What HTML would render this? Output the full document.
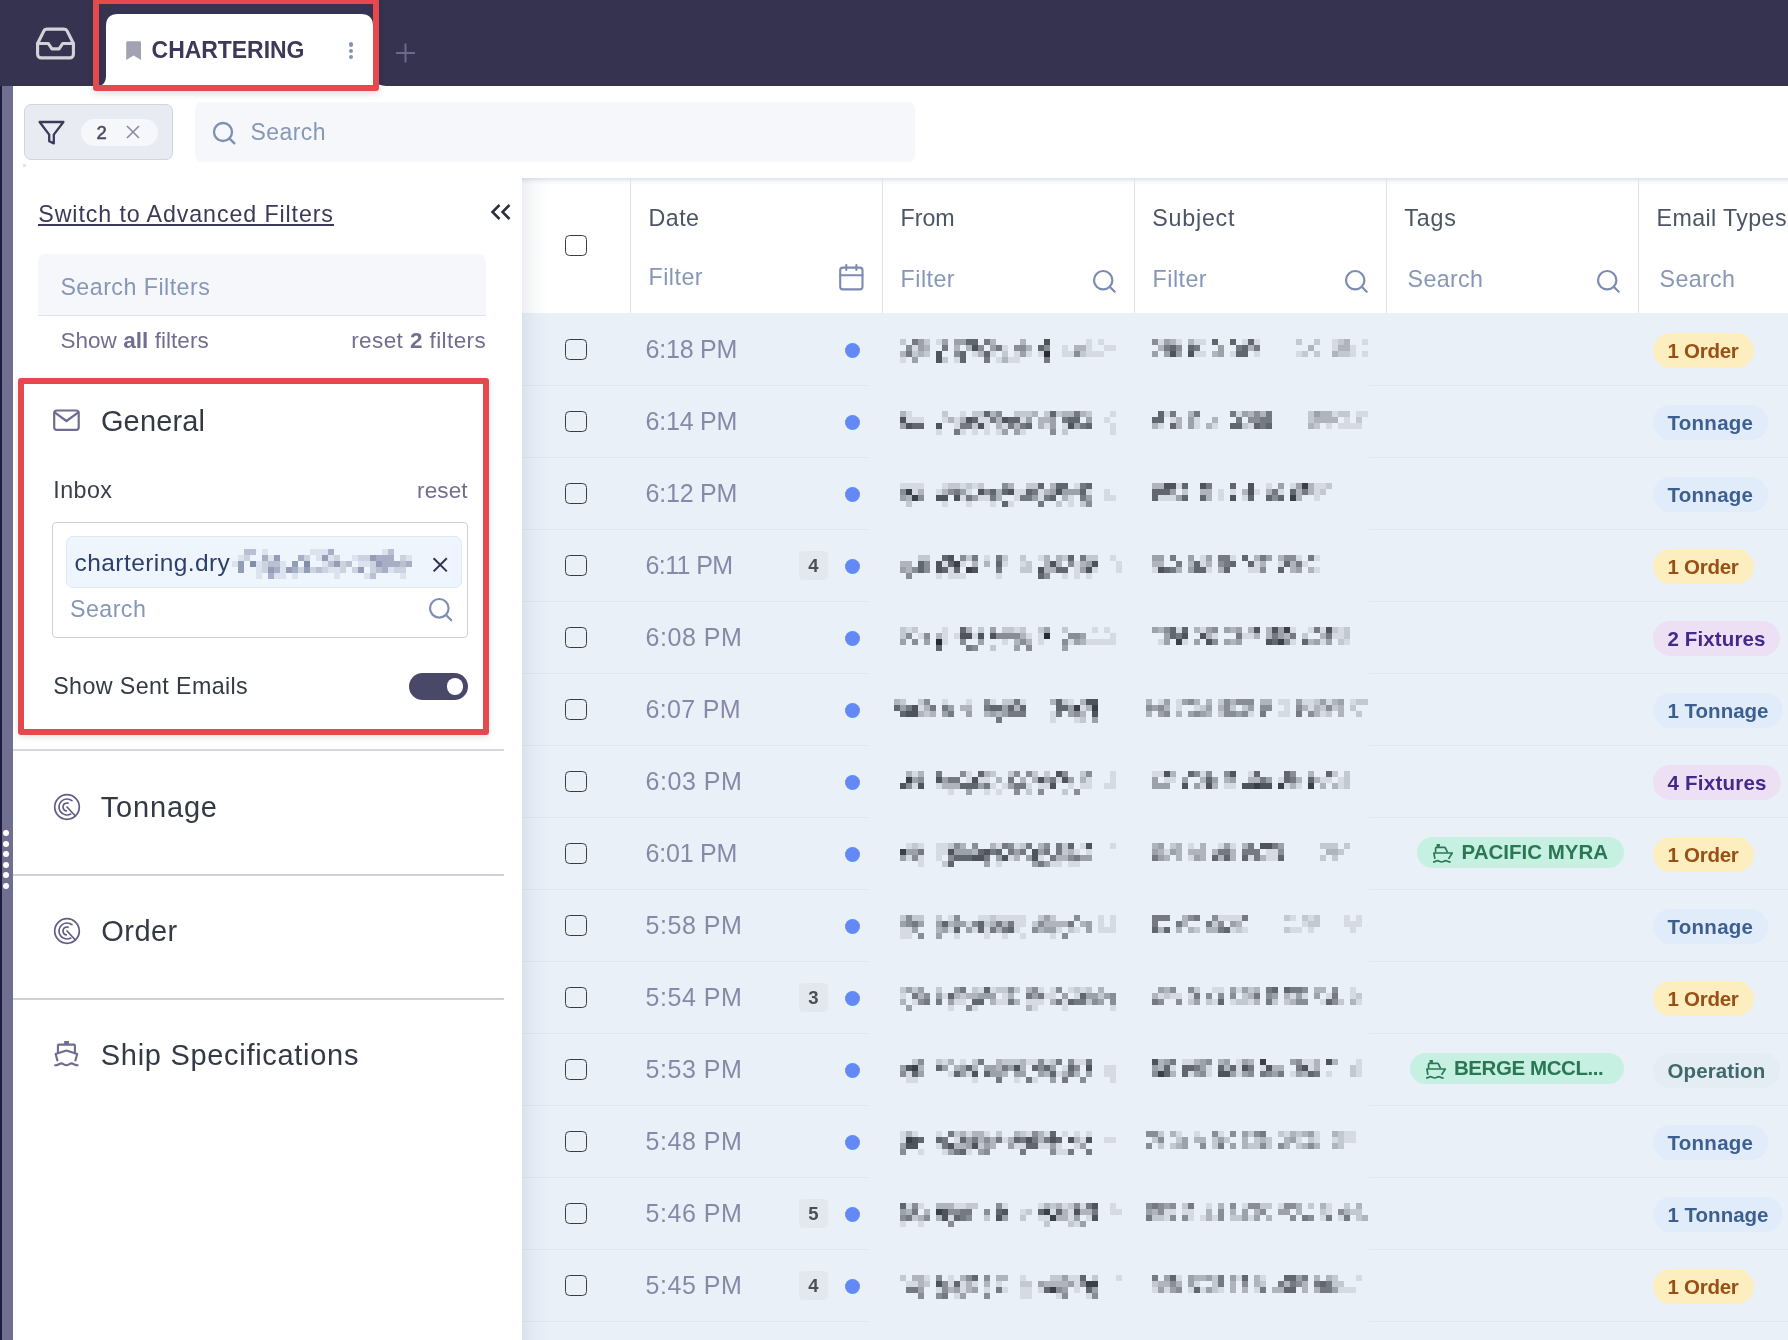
<!DOCTYPE html>
<html lang="en"><head><meta charset="utf-8"><title>Chartering</title>
<style>
*{box-sizing:border-box;margin:0;padding:0}
html,body{width:1788px;height:1340px;overflow:hidden;background:#fff}
body{position:relative;font-family:"Liberation Sans",sans-serif;}
.ab{position:absolute;display:block}
.t{position:absolute;line-height:1;white-space:nowrap}
.cb{position:absolute;width:22px;height:21px;border:1.6px solid #3d3d3d;border-radius:4.5px;background:#fff}
.pill{position:absolute;height:35px;border-radius:18px}
.rl{position:absolute;height:1px;background:#e2e6ed}
.vd{position:absolute;width:1.5px;background:#dfe3ea;top:178px;height:135px}
</style></head><body><div id="root" style="position:absolute;left:0;top:0;width:1788px;height:1340px;will-change:transform">

<div class="ab" style="left:0;top:0;width:1788px;height:86px;background:#35334f"></div>
<div class="ab" style="left:0;top:86px;width:2px;height:1254px;background:#1f1d3f"></div>
<div class="ab" style="left:2px;top:86px;width:11px;height:1254px;background:#706f90"></div>
<div class="ab" style="left:3px;top:830.4px;width:6px;height:6px;border-radius:50%;background:#fff"></div>
<div class="ab" style="left:3px;top:840.9px;width:6px;height:6px;border-radius:50%;background:#fff"></div>
<div class="ab" style="left:3px;top:851.3px;width:6px;height:6px;border-radius:50%;background:#fff"></div>
<div class="ab" style="left:3px;top:861.8px;width:6px;height:6px;border-radius:50%;background:#fff"></div>
<div class="ab" style="left:3px;top:872.2px;width:6px;height:6px;border-radius:50%;background:#fff"></div>
<div class="ab" style="left:3px;top:882.6px;width:6px;height:6px;border-radius:50%;background:#fff"></div>
<svg class="ab" style="left:34px;top:21.5px" width="43" height="43" viewBox="0 0 24 24" fill="none" stroke="#d3d2d9" stroke-width="1.75" stroke-linecap="round" stroke-linejoin="round"><polyline points="22 12 16 12 14 15 10 15 8 12 2 12"/><path d="M5.45 5.11L2 12v6a2 2 0 0 0 2 2h16a2 2 0 0 0 2-2v-6l-3.45-6.89A2 2 0 0 0 16.76 4H7.24a2 2 0 0 0-1.79 1.11z"/></svg>
<svg class="ab" style="left:93px;top:0" width="300" height="92" viewBox="93 0 300 92"><path d="M99 86 C104 85 106 81 106 76 L106 26 Q106 14 118 14 L361 14 Q373 14 373 26 L373 76 C373 81 376 85 386 86 L386 87 L99 87 Z" fill="#fff"/></svg>
<svg class="ab" style="left:394px;top:41px" width="24" height="24" viewBox="394 41 24 24" stroke="#6b6a8a" stroke-width="2" fill="none"><path d="M405.5 43.5V62.5M396 53H415"/></svg>
<svg class="ab" style="left:124px;top:39px" width="20" height="24" viewBox="124 39 20 24"><path d="M126.2 42.6q0-1.4 1.4-1.4h12q1.4 0 1.4 1.4V60l-7.4-4.4L126.2 60z" fill="#a3a2b3"/></svg>
<div class="t" style="left:151.6px;top:39px;font-size:23.0px;color:#3b3a5a;letter-spacing:-0.05px;font-weight:700;">CHARTERING</div>
<div class="ab" style="left:348.7px;top:42.4px;width:4.2px;height:4.2px;border-radius:50%;background:#8493b3"></div>
<div class="ab" style="left:348.7px;top:48.7px;width:4.2px;height:4.2px;border-radius:50%;background:#8493b3"></div>
<div class="ab" style="left:348.7px;top:55.0px;width:4.2px;height:4.2px;border-radius:50%;background:#8493b3"></div>
<div class="ab" style="left:93px;top:-1.6px;width:286px;height:92.1px;border:6px solid #e5484d;border-radius:3px;box-shadow:0 3px 7px rgba(0,0,0,.12)"></div>
<div class="ab" style="left:24px;top:104px;width:149px;height:56px;background:#e8ebf1;border:1px solid #cfd6e2;border-radius:7px"></div>
<svg class="ab" style="left:36px;top:118px" width="32" height="30" viewBox="36 118 32 30" fill="none" stroke="#3b3a5a" stroke-width="2.3" stroke-linejoin="round"><path d="M39.6 122H63.4L53.8 134.6V143.4L49.2 141.2V134.6Z"/></svg>
<div class="ab" style="left:81px;top:119px;width:77px;height:27px;border-radius:14px;background:#f5f7fb"></div>
<div class="t" style="left:96.6px;top:124px;font-size:18.5px;color:#4a4868;-webkit-text-stroke:0.5px #4a4868;">2</div>
<svg class="ab" style="left:124px;top:123px" width="18" height="18" viewBox="124 123 18 18" stroke="#8b8aa3" stroke-width="1.6" fill="none"><path d="M127 126L139 138M139 126L127 138"/></svg>
<div class="ab" style="left:195px;top:102px;width:720px;height:60px;background:#f5f7fb;border-radius:7px"></div>
<svg class="ab" style="left:211.5px;top:120.5px" width="29.0" height="29.0" viewBox="211.5 120.5 29.0 29.0" fill="none" stroke="#7f8fb2" stroke-width="2.3" stroke-linecap="round"><circle cx="222.5" cy="131.5" r="9"/><path d="M228.86 137.86L233.86 142.86"/></svg>
<div class="t" style="left:250.5px;top:121px;font-size:23.0px;color:#8797b7;letter-spacing:0.42px;">Search</div>
<div class="ab" style="left:22.5px;top:163.5px;width:3px;height:3px;background:#e3e5ea"></div>
<div class="t" style="left:38.3px;top:203px;font-size:23.25px;color:#3b3a5a;letter-spacing:0.88px;">Switch to Advanced Filters</div>
<div class="ab" style="left:38px;top:224.2px;width:295.5px;height:1.7px;background:#3b3a5a"></div>
<svg class="ab" style="left:488px;top:200px" width="26" height="24" viewBox="488 200 26 24" fill="none" stroke="#2b2f3d" stroke-width="2.5" stroke-linecap="butt" stroke-linejoin="miter"><path d="M499.5 205L492.5 212L499.5 219M509.5 205L502.5 212L509.5 219"/></svg>
<div class="ab" style="left:38px;top:254px;width:448px;height:61.5px;background:#f5f7fb;border-radius:7px 7px 0 0;border-bottom:1.5px solid #d9e4f3"></div>
<div class="t" style="left:60.4px;top:276px;font-size:23.25px;color:#8797b7;letter-spacing:0.46px;">Search Filters</div>
<div class="t" style="left:60.4px;top:330px;font-size:22.5px;color:#706f90;letter-spacing:0.05px;">Show <b>all</b> filters</div>
<div class="t" style="left:351.2px;top:330px;font-size:22.5px;color:#706f90;letter-spacing:0.41px;">reset <b>2</b> filters</div>
<svg class="ab" style="left:51px;top:407px" width="32" height="27" viewBox="51 407 32 27" fill="none" stroke="#6e6c90" stroke-width="2.2" stroke-linejoin="round" stroke-linecap="round"><rect x="54.2" y="410.5" width="24.5" height="19.4" rx="2.6"/><path d="M54.6 412.3L66.45 421L78.3 412.3"/></svg>
<div class="t" style="left:100.9px;top:407px;font-size:29.0px;color:#333a45;letter-spacing:0.15px;">General</div>
<div class="t" style="left:53.2px;top:479px;font-size:23.25px;color:#3a3f4a;letter-spacing:0.48px;">Inbox</div>
<div class="t" style="left:417.0px;top:480px;font-size:22.5px;color:#706f90;letter-spacing:0.14px;">reset</div>
<div class="ab" style="left:52px;top:522px;width:416px;height:115.5px;border:1.3px solid #cdd0d6;border-radius:4px;background:#fff"></div>
<div class="ab" style="left:66px;top:536px;width:396px;height:51.5px;border:1px solid #dde9f8;border-radius:7px;background:#eff5fd"></div>
<div class="t" style="left:74.6px;top:551px;font-size:24.5px;color:#2d3f6b;letter-spacing:0.42px;">chartering.dry</div>
<svg class="ab" style="left:430px;top:555px" width="20" height="20" viewBox="430 555 20 20" stroke="#2d3350" stroke-width="2" fill="none"><path d="M433.6 558.2L446.8 571.4M446.8 558.2L433.6 571.4"/></svg>
<div class="t" style="left:70.0px;top:598px;font-size:23.25px;color:#8797b7;letter-spacing:0.43px;">Search</div>
<svg class="ab" style="left:427.5px;top:596.9px" width="30.0" height="30.0" viewBox="427.5 596.9 30.0 30.0" fill="none" stroke="#7f8fb2" stroke-width="2.2" stroke-linecap="round"><circle cx="438.8" cy="608.2" r="9.3"/><path d="M445.38 614.78L450.78 620.18"/></svg>
<div class="t" style="left:53.2px;top:675px;font-size:23.25px;color:#333a45;letter-spacing:0.39px;">Show Sent Emails</div>
<div class="ab" style="left:408.8px;top:673px;width:59px;height:27px;border-radius:14px;background:#4a4868"></div>
<div class="ab" style="left:446.6px;top:678.2px;width:16.8px;height:16.8px;border-radius:50%;background:#fff"></div>
<div class="ab" style="left:18px;top:378px;width:471px;height:357px;border:6px solid #e5484d;border-radius:3px;box-shadow:0 2px 6px rgba(0,0,0,.11)"></div>
<div class="ab" style="left:13px;top:749.3px;width:491px;height:1.6px;background:#d6d8de"></div>
<div class="ab" style="left:13px;top:874px;width:491px;height:2px;background:#cfd1d9"></div>
<div class="ab" style="left:13px;top:998px;width:491px;height:2px;background:#cfd1d9"></div>
<svg class="ab" style="left:51.75px;top:791.7px" width="30" height="30" viewBox="51.75 791.7 30 30" fill="none" stroke="#5f5c87" stroke-width="1.7" stroke-linecap="round"><circle cx="66.75" cy="806.7" r="12.3"/><path d="M71.68 800.40A8 8 0 1 0 70.51 813.76"/><path d="M67.79 802.84A4 4 0 1 0 66.06 810.64"/><path d="M66.75 806.7L75.14 815.70"/></svg>
<div class="t" style="left:100.7px;top:793px;font-size:29.0px;color:#333a45;letter-spacing:0.84px;">Tonnage</div>
<svg class="ab" style="left:51.75px;top:915.9px" width="30" height="30" viewBox="51.75 915.9 30 30" fill="none" stroke="#5f5c87" stroke-width="1.7" stroke-linecap="round"><circle cx="66.75" cy="930.9" r="12.3"/><path d="M71.68 924.60A8 8 0 1 0 70.51 937.96"/><path d="M67.79 927.04A4 4 0 1 0 66.06 934.84"/><path d="M66.75 930.9L75.14 939.90"/></svg>
<div class="t" style="left:101.2px;top:917px;font-size:29.0px;color:#333a45;letter-spacing:0.49px;">Order</div>
<svg class="ab" style="left:52px;top:1039px" width="30" height="30" viewBox="52 1039 30 30" fill="none" stroke="#6e6c90" stroke-width="2.1" stroke-linejoin="round" stroke-linecap="butt"><rect x="64.2" y="1041" width="4.7" height="3.6" fill="#6e6c90" stroke="none"/><path d="M57.9 1053V1045.6Q57.9 1044.6 58.9 1044.6H73.9Q74.9 1044.6 74.9 1045.6V1053"/><path d="M57.6 1061.2L55.6 1054L66.4 1050.6L77.2 1054L75.2 1061.2"/><path d="M54.3 1065.3H55.3C58 1065.3 59.5 1063.4 61.3 1063.4C63.3 1063.4 64.3 1065.3 66.4 1065.3C68.5 1065.3 69.5 1063.4 71.5 1063.4C73.3 1063.4 74.8 1065.3 77.5 1065.3H78.5"/></svg>
<div class="t" style="left:100.8px;top:1041px;font-size:29.0px;color:#333a45;letter-spacing:0.70px;">Ship Specifications</div>
<div class="ab" style="left:522px;top:178px;width:1266px;height:135px;background:#fff"></div>
<div class="ab" style="left:522px;top:313px;width:1266px;height:1027px;background:#eaf0f8"></div>
<div class="rl" style="left:522px;top:385.0px;width:346px"></div>
<div class="rl" style="left:1369px;top:385.0px;width:419px"></div>
<div class="rl" style="left:522px;top:457.0px;width:346px"></div>
<div class="rl" style="left:1369px;top:457.0px;width:419px"></div>
<div class="rl" style="left:522px;top:529.0px;width:346px"></div>
<div class="rl" style="left:1369px;top:529.0px;width:419px"></div>
<div class="rl" style="left:522px;top:601.0px;width:346px"></div>
<div class="rl" style="left:1369px;top:601.0px;width:419px"></div>
<div class="rl" style="left:522px;top:673.0px;width:346px"></div>
<div class="rl" style="left:1369px;top:673.0px;width:419px"></div>
<div class="rl" style="left:522px;top:745.0px;width:346px"></div>
<div class="rl" style="left:1369px;top:745.0px;width:419px"></div>
<div class="rl" style="left:522px;top:817.0px;width:346px"></div>
<div class="rl" style="left:1369px;top:817.0px;width:419px"></div>
<div class="rl" style="left:522px;top:889.0px;width:346px"></div>
<div class="rl" style="left:1369px;top:889.0px;width:419px"></div>
<div class="rl" style="left:522px;top:961.0px;width:346px"></div>
<div class="rl" style="left:1369px;top:961.0px;width:419px"></div>
<div class="rl" style="left:522px;top:1033.0px;width:346px"></div>
<div class="rl" style="left:1369px;top:1033.0px;width:419px"></div>
<div class="rl" style="left:522px;top:1105.0px;width:346px"></div>
<div class="rl" style="left:1369px;top:1105.0px;width:419px"></div>
<div class="rl" style="left:522px;top:1177.0px;width:346px"></div>
<div class="rl" style="left:1369px;top:1177.0px;width:419px"></div>
<div class="rl" style="left:522px;top:1249.0px;width:346px"></div>
<div class="rl" style="left:1369px;top:1249.0px;width:419px"></div>
<div class="rl" style="left:522px;top:1321.0px;width:346px"></div>
<div class="rl" style="left:1369px;top:1321.0px;width:419px"></div>
<div class="ab" style="left:522px;top:178px;width:1266px;height:7px;background:linear-gradient(#dfe3eb,rgba(240,242,246,.6) 55%,rgba(255,255,255,0))"></div>
<div class="ab" style="left:522px;top:178px;width:26px;height:1162px;background:linear-gradient(90deg,rgba(120,130,155,.13),rgba(120,130,155,.05) 45%,rgba(120,130,155,0))"></div>
<div class="vd" style="left:629.7px"></div>
<div class="vd" style="left:881.7px"></div>
<div class="vd" style="left:1133.7px"></div>
<div class="vd" style="left:1385.7px"></div>
<div class="vd" style="left:1637.7px"></div>
<div class="cb" style="left:565px;top:235px"></div>
<div class="t" style="left:648.6px;top:207px;font-size:23.25px;color:#4b5563;letter-spacing:0.43px;">Date</div>
<div class="t" style="left:900.6px;top:207px;font-size:23.25px;color:#4b5563;letter-spacing:-0.08px;">From</div>
<div class="t" style="left:1152.3px;top:207px;font-size:23.25px;color:#4b5563;letter-spacing:0.77px;">Subject</div>
<div class="t" style="left:1404.3px;top:207px;font-size:23.25px;color:#4b5563;letter-spacing:0.86px;">Tags</div>
<div class="t" style="left:1656.5px;top:207px;font-size:23.25px;color:#4b5563;letter-spacing:0.38px;">Email Types</div>
<div class="t" style="left:648.6px;top:266px;font-size:23.25px;color:#8797b7;letter-spacing:0.45px;">Filter</div>
<div class="t" style="left:900.6px;top:268px;font-size:23.25px;color:#8797b7;letter-spacing:0.47px;">Filter</div>
<div class="t" style="left:1152.6px;top:268px;font-size:23.25px;color:#8797b7;letter-spacing:0.47px;">Filter</div>
<div class="t" style="left:1407.6px;top:268px;font-size:23.25px;color:#8797b7;letter-spacing:0.35px;">Search</div>
<div class="t" style="left:1659.6px;top:268px;font-size:23.25px;color:#8797b7;letter-spacing:0.35px;">Search</div>
<svg class="ab" style="left:837px;top:262px" width="30" height="32" viewBox="837 262 30 32" fill="none" stroke="#7b8bb2" stroke-width="2.1" stroke-linecap="round" stroke-linejoin="round"><rect x="840.2" y="267.6" width="22.3" height="21.8" rx="2.6"/><path d="M840.2 275.2H862.5M846.3 265V270M856.4 265V270"/></svg>
<svg class="ab" style="left:1092.1px;top:269.1px" width="29.4" height="29.4" viewBox="1092.1 269.1 29.4 29.4" fill="none" stroke="#7b8bb2" stroke-width="2.2" stroke-linecap="round"><circle cx="1103.3" cy="280.3" r="9.2"/><path d="M1109.81 286.81L1114.81 291.81"/></svg>
<svg class="ab" style="left:1344.1px;top:269.1px" width="29.4" height="29.4" viewBox="1344.1 269.1 29.4 29.4" fill="none" stroke="#7b8bb2" stroke-width="2.2" stroke-linecap="round"><circle cx="1355.3" cy="280.3" r="9.2"/><path d="M1361.81 286.81L1366.81 291.81"/></svg>
<svg class="ab" style="left:1596.1px;top:269.1px" width="29.4" height="29.4" viewBox="1596.1 269.1 29.4 29.4" fill="none" stroke="#7b8bb2" stroke-width="2.2" stroke-linecap="round"><circle cx="1607.3" cy="280.3" r="9.2"/><path d="M1613.81 286.81L1618.81 291.81"/></svg>
<div class="cb" style="left:565px;top:338.8px;background:transparent"></div>
<div class="t" style="left:645.6px;top:337px;font-size:25.0px;color:#868aa8;letter-spacing:-0.22px;">6:18 PM</div>
<div class="ab" style="left:845.3px;top:342.5px;width:15px;height:15px;border-radius:50%;background:#6389f4"></div>
<div class="pill" style="left:1653px;top:332.6px;width:101px;background:#fdeec0"></div>
<div class="t" style="left:1667.5px;top:341px;font-size:20.5px;color:#9a4f17;letter-spacing:-0.27px;font-weight:700;">1 Order</div>
<div class="cb" style="left:565px;top:410.8px;background:transparent"></div>
<div class="t" style="left:645.6px;top:409px;font-size:25.0px;color:#868aa8;letter-spacing:-0.22px;">6:14 PM</div>
<div class="ab" style="left:845.3px;top:414.5px;width:15px;height:15px;border-radius:50%;background:#6389f4"></div>
<div class="pill" style="left:1653px;top:404.6px;width:114.6px;background:#e1ecfa"></div>
<div class="t" style="left:1667.5px;top:413px;font-size:20.5px;color:#3d5f8f;letter-spacing:0.27px;font-weight:700;">Tonnage</div>
<div class="cb" style="left:565px;top:482.8px;background:transparent"></div>
<div class="t" style="left:645.6px;top:481px;font-size:25.0px;color:#868aa8;letter-spacing:-0.22px;">6:12 PM</div>
<div class="ab" style="left:845.3px;top:486.5px;width:15px;height:15px;border-radius:50%;background:#6389f4"></div>
<div class="pill" style="left:1653px;top:476.6px;width:114.6px;background:#e1ecfa"></div>
<div class="t" style="left:1667.5px;top:485px;font-size:20.5px;color:#3d5f8f;letter-spacing:0.27px;font-weight:700;">Tonnage</div>
<div class="cb" style="left:565px;top:554.8px;background:transparent"></div>
<div class="t" style="left:645.6px;top:553px;font-size:25.0px;color:#868aa8;letter-spacing:-0.64px;">6:11 PM</div>
<div class="ab" style="left:799px;top:550.6px;width:29px;height:29px;border-radius:4.5px;background:#e3e7ee"></div>
<div class="t" style="left:808.2px;top:557px;font-size:18.5px;color:#4a4f5a;font-weight:700;">4</div>
<div class="ab" style="left:845.3px;top:558.5px;width:15px;height:15px;border-radius:50%;background:#6389f4"></div>
<div class="pill" style="left:1653px;top:548.6px;width:101px;background:#fdeec0"></div>
<div class="t" style="left:1667.5px;top:557px;font-size:20.5px;color:#9a4f17;letter-spacing:-0.27px;font-weight:700;">1 Order</div>
<div class="cb" style="left:565px;top:626.8px;background:transparent"></div>
<div class="t" style="left:645.6px;top:625px;font-size:25.0px;color:#868aa8;letter-spacing:0.52px;">6:08 PM</div>
<div class="ab" style="left:845.3px;top:630.5px;width:15px;height:15px;border-radius:50%;background:#6389f4"></div>
<div class="pill" style="left:1653px;top:620.6px;width:127px;background:#eee0f4"></div>
<div class="t" style="left:1667.5px;top:629px;font-size:20.5px;color:#45288a;letter-spacing:0.13px;font-weight:700;">2 Fixtures</div>
<div class="cb" style="left:565px;top:698.8px;background:transparent"></div>
<div class="t" style="left:645.6px;top:697px;font-size:25.0px;color:#868aa8;letter-spacing:0.30px;">6:07 PM</div>
<div class="ab" style="left:845.3px;top:702.5px;width:15px;height:15px;border-radius:50%;background:#6389f4"></div>
<div class="pill" style="left:1653px;top:692.6px;width:130px;background:#e1ecfa"></div>
<div class="t" style="left:1667.5px;top:701px;font-size:20.5px;color:#3d5f8f;letter-spacing:0.00px;font-weight:700;">1 Tonnage</div>
<div class="cb" style="left:565px;top:770.8px;background:transparent"></div>
<div class="t" style="left:645.6px;top:769px;font-size:25.0px;color:#868aa8;letter-spacing:0.52px;">6:03 PM</div>
<div class="ab" style="left:845.3px;top:774.5px;width:15px;height:15px;border-radius:50%;background:#6389f4"></div>
<div class="pill" style="left:1653px;top:764.6px;width:128px;background:#eee0f4"></div>
<div class="t" style="left:1667.5px;top:773px;font-size:20.5px;color:#45288a;letter-spacing:0.24px;font-weight:700;">4 Fixtures</div>
<div class="cb" style="left:565px;top:842.8px;background:transparent"></div>
<div class="t" style="left:645.6px;top:841px;font-size:25.0px;color:#868aa8;letter-spacing:-0.22px;">6:01 PM</div>
<div class="ab" style="left:845.3px;top:846.5px;width:15px;height:15px;border-radius:50%;background:#6389f4"></div>
<div class="pill" style="left:1653px;top:836.6px;width:101px;background:#fdeec0"></div>
<div class="t" style="left:1667.5px;top:845px;font-size:20.5px;color:#9a4f17;letter-spacing:-0.27px;font-weight:700;">1 Order</div>
<div class="ab" style="left:1417px;top:837px;width:206.6px;height:31px;border-radius:16px;background:#c6f0e2"></div>
<svg class="ab" style="left:1432.1px;top:842.6px" width="23" height="22" viewBox="-1 -1 23 22" fill="none" stroke="#2a7853" stroke-width="1.7" stroke-linejoin="round"><rect x="3.6" y="0" width="3.3" height="2.8" fill="#2a7853" stroke="none"/><path d="M2.6 8.4V4.2Q2.6 3.3 3.5 3.3H11.3Q12.1 3.3 12.5 4.1L14.5 8.4"/><path d="M0.2 9H19.9M0.9 9L1.9 14.9M19.3 9L15.5 14.9"/><path d="M0 18C2.2 18 3 16.7 4.4 16.7C6 16.7 6.6 18 8.7 18C10.6 18 11.2 16.7 12.8 16.7C14.2 16.7 15 18 17.7 18"/></svg>
<div class="t" style="left:1461.6px;top:842px;font-size:20.5px;color:#2a7853;letter-spacing:-0.01px;font-weight:700;">PACIFIC MYRA</div>
<div class="cb" style="left:565px;top:914.8px;background:transparent"></div>
<div class="t" style="left:645.6px;top:913px;font-size:25.0px;color:#868aa8;letter-spacing:0.52px;">5:58 PM</div>
<div class="ab" style="left:845.3px;top:918.5px;width:15px;height:15px;border-radius:50%;background:#6389f4"></div>
<div class="pill" style="left:1653px;top:908.6px;width:114.6px;background:#e1ecfa"></div>
<div class="t" style="left:1667.5px;top:917px;font-size:20.5px;color:#3d5f8f;letter-spacing:0.27px;font-weight:700;">Tonnage</div>
<div class="cb" style="left:565px;top:986.8px;background:transparent"></div>
<div class="t" style="left:645.6px;top:985px;font-size:25.0px;color:#868aa8;letter-spacing:0.52px;">5:54 PM</div>
<div class="ab" style="left:799px;top:982.6px;width:29px;height:29px;border-radius:4.5px;background:#e3e7ee"></div>
<div class="t" style="left:808.2px;top:989px;font-size:18.5px;color:#4a4f5a;font-weight:700;">3</div>
<div class="ab" style="left:845.3px;top:990.5px;width:15px;height:15px;border-radius:50%;background:#6389f4"></div>
<div class="pill" style="left:1653px;top:980.6px;width:101px;background:#fdeec0"></div>
<div class="t" style="left:1667.5px;top:989px;font-size:20.5px;color:#9a4f17;letter-spacing:-0.27px;font-weight:700;">1 Order</div>
<div class="cb" style="left:565px;top:1058.8px;background:transparent"></div>
<div class="t" style="left:645.6px;top:1057px;font-size:25.0px;color:#868aa8;letter-spacing:0.52px;">5:53 PM</div>
<div class="ab" style="left:845.3px;top:1062.5px;width:15px;height:15px;border-radius:50%;background:#6389f4"></div>
<div class="pill" style="left:1653px;top:1052.6px;width:127px;background:#e4edf3"></div>
<div class="t" style="left:1667.5px;top:1061px;font-size:20.5px;color:#41686c;letter-spacing:0.12px;font-weight:700;">Operation</div>
<div class="ab" style="left:1409.7px;top:1053px;width:213.9px;height:31px;border-radius:16px;background:#c6f0e2"></div>
<svg class="ab" style="left:1425.2px;top:1058.6px" width="23" height="22" viewBox="-1 -1 23 22" fill="none" stroke="#2a7853" stroke-width="1.7" stroke-linejoin="round"><rect x="3.6" y="0" width="3.3" height="2.8" fill="#2a7853" stroke="none"/><path d="M2.6 8.4V4.2Q2.6 3.3 3.5 3.3H11.3Q12.1 3.3 12.5 4.1L14.5 8.4"/><path d="M0.2 9H19.9M0.9 9L1.9 14.9M19.3 9L15.5 14.9"/><path d="M0 18C2.2 18 3 16.7 4.4 16.7C6 16.7 6.6 18 8.7 18C10.6 18 11.2 16.7 12.8 16.7C14.2 16.7 15 18 17.7 18"/></svg>
<div class="t" style="left:1454.0px;top:1058px;font-size:20.5px;color:#2a7853;letter-spacing:-0.43px;font-weight:700;">BERGE MCCL...</div>
<div class="cb" style="left:565px;top:1130.8px;background:transparent"></div>
<div class="t" style="left:645.6px;top:1129px;font-size:25.0px;color:#868aa8;letter-spacing:0.52px;">5:48 PM</div>
<div class="ab" style="left:845.3px;top:1134.5px;width:15px;height:15px;border-radius:50%;background:#6389f4"></div>
<div class="pill" style="left:1653px;top:1124.6px;width:114.6px;background:#e1ecfa"></div>
<div class="t" style="left:1667.5px;top:1133px;font-size:20.5px;color:#3d5f8f;letter-spacing:0.27px;font-weight:700;">Tonnage</div>
<div class="cb" style="left:565px;top:1202.8px;background:transparent"></div>
<div class="t" style="left:645.6px;top:1201px;font-size:25.0px;color:#868aa8;letter-spacing:0.52px;">5:46 PM</div>
<div class="ab" style="left:799px;top:1198.6px;width:29px;height:29px;border-radius:4.5px;background:#e3e7ee"></div>
<div class="t" style="left:808.2px;top:1205px;font-size:18.5px;color:#4a4f5a;font-weight:700;">5</div>
<div class="ab" style="left:845.3px;top:1206.5px;width:15px;height:15px;border-radius:50%;background:#6389f4"></div>
<div class="pill" style="left:1653px;top:1196.6px;width:130px;background:#e1ecfa"></div>
<div class="t" style="left:1667.5px;top:1205px;font-size:20.5px;color:#3d5f8f;letter-spacing:0.00px;font-weight:700;">1 Tonnage</div>
<div class="cb" style="left:565px;top:1274.8px;background:transparent"></div>
<div class="t" style="left:645.6px;top:1273px;font-size:25.0px;color:#868aa8;letter-spacing:0.52px;">5:45 PM</div>
<div class="ab" style="left:799px;top:1270.6px;width:29px;height:29px;border-radius:4.5px;background:#e3e7ee"></div>
<div class="t" style="left:808.2px;top:1277px;font-size:18.5px;color:#4a4f5a;font-weight:700;">4</div>
<div class="ab" style="left:845.3px;top:1278.5px;width:15px;height:15px;border-radius:50%;background:#6389f4"></div>
<div class="pill" style="left:1653px;top:1268.6px;width:101px;background:#fdeec0"></div>
<div class="t" style="left:1667.5px;top:1277px;font-size:20.5px;color:#9a4f17;letter-spacing:-0.27px;font-weight:700;">1 Order</div>
<svg class="ab" style="left:880px;top:313px" width="500" height="1027" viewBox="880 313 500 1027" fill="#272c34" shape-rendering="crispEdges"><path fill-opacity="0.1" d="M900.4 357h6v6h-6zM912.4 345h6v6h-6zM936.4 339h6v6h-6zM954.4 357h6v6h-6zM972.4 351h6v6h-6zM990.4 351h6v6h-6zM996.4 357h6v6h-6zM1002.4 345h6v6h-6zM1008.4 357h6v6h-6zM1014.4 351h6v6h-6zM1014.4 357h6v6h-6zM1026.4 351h6v6h-6zM1038.4 351h6v6h-6zM1062.4 345h6v6h-6zM1062.4 351h6v6h-6zM1068.4 351h6v6h-6zM1086.4 339h6v6h-6zM1086.4 345h6v6h-6zM1086.4 351h6v6h-6zM1092.4 351h6v6h-6zM1098.4 339h6v6h-6zM1098.4 351h6v6h-6zM1104.4 345h6v6h-6zM1110.4 345h6v6h-6zM1158.4 339h6v6h-6zM1176.4 339h6v6h-6zM1194.4 339h6v6h-6zM1194.4 351h6v6h-6zM1200.4 339h6v6h-6zM1200.4 351h6v6h-6zM1230.4 351h6v6h-6zM1242.4 339h6v6h-6zM1254.4 339h6v6h-6zM1254.4 351h6v6h-6zM1296.4 351h6v6h-6zM1332.4 339h6v6h-6zM1332.4 345h6v6h-6zM1350.4 345h6v6h-6zM1350.4 351h6v6h-6zM1362.4 339h6v6h-6zM1362.4 351h6v6h-6zM906.4 411h6v6h-6zM906.4 417h6v6h-6zM912.4 417h6v6h-6zM918.4 417h6v6h-6zM936.4 429h6v6h-6zM942.4 417h6v6h-6zM954.4 417h6v6h-6zM954.4 423h6v6h-6zM960.4 411h6v6h-6zM960.4 429h6v6h-6zM972.4 429h6v6h-6zM978.4 417h6v6h-6zM984.4 417h6v6h-6zM984.4 423h6v6h-6zM984.4 429h6v6h-6zM996.4 429h6v6h-6zM1002.4 423h6v6h-6zM1020.4 417h6v6h-6zM1020.4 429h6v6h-6zM1044.4 423h6v6h-6zM1062.4 423h6v6h-6zM1104.4 417h6v6h-6zM1110.4 411h6v6h-6zM1110.4 423h6v6h-6zM1110.4 429h6v6h-6zM1158.4 423h6v6h-6zM1164.4 411h6v6h-6zM1170.4 417h6v6h-6zM1194.4 417h6v6h-6zM1194.4 423h6v6h-6zM1212.4 423h6v6h-6zM1236.4 411h6v6h-6zM1248.4 423h6v6h-6zM1326.4 423h6v6h-6zM1332.4 411h6v6h-6zM1338.4 423h6v6h-6zM1344.4 417h6v6h-6zM1344.4 423h6v6h-6zM1350.4 423h6v6h-6zM1356.4 411h6v6h-6zM1356.4 423h6v6h-6zM1362.4 411h6v6h-6zM900.4 483h6v6h-6zM906.4 483h6v6h-6zM912.4 483h6v6h-6zM912.4 489h6v6h-6zM918.4 483h6v6h-6zM936.4 489h6v6h-6zM942.4 483h6v6h-6zM942.4 501h6v6h-6zM960.4 483h6v6h-6zM960.4 495h6v6h-6zM966.4 489h6v6h-6zM966.4 501h6v6h-6zM972.4 483h6v6h-6zM978.4 495h6v6h-6zM984.4 495h6v6h-6zM990.4 501h6v6h-6zM1008.4 501h6v6h-6zM1014.4 489h6v6h-6zM1014.4 495h6v6h-6zM1020.4 489h6v6h-6zM1038.4 489h6v6h-6zM1038.4 495h6v6h-6zM1068.4 495h6v6h-6zM1068.4 501h6v6h-6zM1074.4 483h6v6h-6zM1086.4 489h6v6h-6zM1104.4 489h6v6h-6zM1104.4 495h6v6h-6zM1110.4 495h6v6h-6zM1158.4 495h6v6h-6zM1164.4 495h6v6h-6zM1170.4 495h6v6h-6zM1176.4 483h6v6h-6zM1218.4 489h6v6h-6zM1218.4 495h6v6h-6zM1230.4 489h6v6h-6zM1242.4 495h6v6h-6zM1254.4 489h6v6h-6zM1266.4 483h6v6h-6zM1278.4 489h6v6h-6zM1290.4 483h6v6h-6zM1314.4 483h6v6h-6zM1314.4 489h6v6h-6zM1314.4 495h6v6h-6zM1320.4 483h6v6h-6zM936.4 573h6v6h-6zM942.4 561h6v6h-6zM948.4 567h6v6h-6zM948.4 573h6v6h-6zM954.4 573h6v6h-6zM960.4 561h6v6h-6zM960.4 573h6v6h-6zM984.4 555h6v6h-6zM996.4 573h6v6h-6zM1002.4 561h6v6h-6zM1020.4 561h6v6h-6zM1038.4 555h6v6h-6zM1062.4 573h6v6h-6zM1074.4 561h6v6h-6zM1074.4 567h6v6h-6zM1074.4 573h6v6h-6zM1086.4 573h6v6h-6zM1092.4 567h6v6h-6zM1110.4 555h6v6h-6zM1116.4 561h6v6h-6zM1116.4 567h6v6h-6zM1152.4 567h6v6h-6zM1200.4 555h6v6h-6zM1200.4 561h6v6h-6zM1206.4 567h6v6h-6zM1230.4 555h6v6h-6zM1248.4 567h6v6h-6zM1254.4 561h6v6h-6zM1254.4 567h6v6h-6zM1278.4 561h6v6h-6zM1296.4 555h6v6h-6zM1302.4 561h6v6h-6zM1314.4 555h6v6h-6zM1314.4 567h6v6h-6zM906.4 627h6v6h-6zM918.4 633h6v6h-6zM942.4 627h6v6h-6zM942.4 633h6v6h-6zM942.4 639h6v6h-6zM954.4 633h6v6h-6zM972.4 633h6v6h-6zM1002.4 639h6v6h-6zM1014.4 627h6v6h-6zM1026.4 633h6v6h-6zM1038.4 633h6v6h-6zM1038.4 639h6v6h-6zM1068.4 639h6v6h-6zM1086.4 639h6v6h-6zM1092.4 627h6v6h-6zM1092.4 639h6v6h-6zM1098.4 639h6v6h-6zM1104.4 627h6v6h-6zM1104.4 639h6v6h-6zM1110.4 633h6v6h-6zM1110.4 639h6v6h-6zM1158.4 639h6v6h-6zM1176.4 627h6v6h-6zM1182.4 639h6v6h-6zM1200.4 627h6v6h-6zM1212.4 633h6v6h-6zM1242.4 633h6v6h-6zM1248.4 633h6v6h-6zM1290.4 627h6v6h-6zM1290.4 639h6v6h-6zM1308.4 627h6v6h-6zM1320.4 627h6v6h-6zM1320.4 639h6v6h-6zM1332.4 633h6v6h-6zM1338.4 627h6v6h-6zM1338.4 633h6v6h-6zM1344.4 639h6v6h-6zM918.4 705h6v6h-6zM942.4 699h6v6h-6zM966.4 699h6v6h-6zM990.4 699h6v6h-6zM1020.4 699h6v6h-6zM1050.4 711h6v6h-6zM1050.4 717h6v6h-6zM1068.4 699h6v6h-6zM1074.4 717h6v6h-6zM1080.4 705h6v6h-6zM1158.4 699h6v6h-6zM1176.4 699h6v6h-6zM1176.4 705h6v6h-6zM1194.4 705h6v6h-6zM1248.4 711h6v6h-6zM1278.4 699h6v6h-6zM1278.4 711h6v6h-6zM1284.4 699h6v6h-6zM1284.4 705h6v6h-6zM1284.4 711h6v6h-6zM1302.4 699h6v6h-6zM1308.4 699h6v6h-6zM1308.4 705h6v6h-6zM1320.4 711h6v6h-6zM1326.4 699h6v6h-6zM1350.4 699h6v6h-6zM912.4 771h6v6h-6zM912.4 783h6v6h-6zM936.4 783h6v6h-6zM948.4 789h6v6h-6zM966.4 771h6v6h-6zM966.4 777h6v6h-6zM978.4 777h6v6h-6zM984.4 777h6v6h-6zM984.4 789h6v6h-6zM990.4 783h6v6h-6zM996.4 789h6v6h-6zM1002.4 783h6v6h-6zM1026.4 783h6v6h-6zM1038.4 783h6v6h-6zM1044.4 783h6v6h-6zM1056.4 777h6v6h-6zM1068.4 783h6v6h-6zM1080.4 783h6v6h-6zM1086.4 777h6v6h-6zM1086.4 783h6v6h-6zM1104.4 783h6v6h-6zM1110.4 771h6v6h-6zM1110.4 777h6v6h-6zM1110.4 783h6v6h-6zM1152.4 771h6v6h-6zM1158.4 771h6v6h-6zM1164.4 777h6v6h-6zM1170.4 777h6v6h-6zM1200.4 771h6v6h-6zM1200.4 783h6v6h-6zM1224.4 783h6v6h-6zM1230.4 783h6v6h-6zM1248.4 771h6v6h-6zM1278.4 777h6v6h-6zM1284.4 783h6v6h-6zM1296.4 783h6v6h-6zM1320.4 777h6v6h-6zM1326.4 777h6v6h-6zM1338.4 777h6v6h-6zM1338.4 783h6v6h-6zM906.4 843h6v6h-6zM906.4 855h6v6h-6zM918.4 843h6v6h-6zM918.4 855h6v6h-6zM918.4 861h6v6h-6zM936.4 843h6v6h-6zM936.4 849h6v6h-6zM936.4 855h6v6h-6zM942.4 843h6v6h-6zM942.4 849h6v6h-6zM996.4 843h6v6h-6zM996.4 861h6v6h-6zM1008.4 855h6v6h-6zM1014.4 843h6v6h-6zM1038.4 855h6v6h-6zM1050.4 861h6v6h-6zM1056.4 861h6v6h-6zM1068.4 861h6v6h-6zM1074.4 849h6v6h-6zM1074.4 861h6v6h-6zM1080.4 843h6v6h-6zM1086.4 849h6v6h-6zM1110.4 843h6v6h-6zM1164.4 849h6v6h-6zM1188.4 843h6v6h-6zM1188.4 855h6v6h-6zM1218.4 843h6v6h-6zM1230.4 843h6v6h-6zM1248.4 855h6v6h-6zM1266.4 849h6v6h-6zM1266.4 855h6v6h-6zM1272.4 849h6v6h-6zM1272.4 855h6v6h-6zM900.4 927h6v6h-6zM900.4 933h6v6h-6zM906.4 927h6v6h-6zM906.4 933h6v6h-6zM948.4 915h6v6h-6zM948.4 927h6v6h-6zM954.4 933h6v6h-6zM966.4 921h6v6h-6zM972.4 927h6v6h-6zM978.4 915h6v6h-6zM984.4 915h6v6h-6zM984.4 927h6v6h-6zM984.4 933h6v6h-6zM996.4 915h6v6h-6zM1002.4 915h6v6h-6zM1002.4 933h6v6h-6zM1008.4 915h6v6h-6zM1014.4 915h6v6h-6zM1014.4 921h6v6h-6zM1014.4 927h6v6h-6zM1020.4 915h6v6h-6zM1020.4 921h6v6h-6zM1020.4 933h6v6h-6zM1050.4 933h6v6h-6zM1056.4 927h6v6h-6zM1074.4 927h6v6h-6zM1098.4 915h6v6h-6zM1098.4 921h6v6h-6zM1098.4 927h6v6h-6zM1104.4 927h6v6h-6zM1110.4 915h6v6h-6zM1110.4 921h6v6h-6zM1110.4 927h6v6h-6zM1218.4 915h6v6h-6zM1224.4 915h6v6h-6zM1230.4 915h6v6h-6zM1230.4 927h6v6h-6zM1236.4 915h6v6h-6zM1242.4 927h6v6h-6zM1290.4 915h6v6h-6zM1290.4 927h6v6h-6zM1296.4 927h6v6h-6zM1302.4 921h6v6h-6zM1308.4 915h6v6h-6zM1308.4 927h6v6h-6zM1344.4 915h6v6h-6zM1344.4 921h6v6h-6zM1350.4 921h6v6h-6zM1350.4 927h6v6h-6zM1356.4 915h6v6h-6zM1356.4 921h6v6h-6zM900.4 993h6v6h-6zM912.4 999h6v6h-6zM942.4 993h6v6h-6zM948.4 1005h6v6h-6zM954.4 999h6v6h-6zM960.4 999h6v6h-6zM972.4 1005h6v6h-6zM978.4 987h6v6h-6zM990.4 987h6v6h-6zM996.4 999h6v6h-6zM1002.4 993h6v6h-6zM1002.4 999h6v6h-6zM1026.4 999h6v6h-6zM1032.4 999h6v6h-6zM1032.4 1005h6v6h-6zM1038.4 987h6v6h-6zM1038.4 999h6v6h-6zM1044.4 993h6v6h-6zM1050.4 987h6v6h-6zM1050.4 993h6v6h-6zM1062.4 999h6v6h-6zM1062.4 1005h6v6h-6zM1068.4 987h6v6h-6zM1074.4 993h6v6h-6zM1080.4 987h6v6h-6zM1110.4 1005h6v6h-6zM1158.4 993h6v6h-6zM1170.4 993h6v6h-6zM1176.4 993h6v6h-6zM1188.4 993h6v6h-6zM1212.4 987h6v6h-6zM1212.4 999h6v6h-6zM1218.4 987h6v6h-6zM1230.4 999h6v6h-6zM1236.4 987h6v6h-6zM1248.4 999h6v6h-6zM1290.4 993h6v6h-6zM1302.4 993h6v6h-6zM1320.4 999h6v6h-6zM1326.4 993h6v6h-6zM1350.4 987h6v6h-6zM1350.4 993h6v6h-6zM1356.4 999h6v6h-6zM906.4 1071h6v6h-6zM906.4 1077h6v6h-6zM912.4 1077h6v6h-6zM942.4 1059h6v6h-6zM948.4 1071h6v6h-6zM960.4 1059h6v6h-6zM966.4 1071h6v6h-6zM972.4 1077h6v6h-6zM1014.4 1077h6v6h-6zM1026.4 1059h6v6h-6zM1032.4 1059h6v6h-6zM1032.4 1077h6v6h-6zM1044.4 1059h6v6h-6zM1056.4 1071h6v6h-6zM1062.4 1065h6v6h-6zM1074.4 1059h6v6h-6zM1080.4 1059h6v6h-6zM1104.4 1065h6v6h-6zM1104.4 1071h6v6h-6zM1110.4 1065h6v6h-6zM1110.4 1071h6v6h-6zM1110.4 1077h6v6h-6zM1170.4 1065h6v6h-6zM1182.4 1059h6v6h-6zM1188.4 1059h6v6h-6zM1188.4 1071h6v6h-6zM1206.4 1065h6v6h-6zM1206.4 1071h6v6h-6zM1236.4 1059h6v6h-6zM1236.4 1065h6v6h-6zM1236.4 1071h6v6h-6zM1260.4 1065h6v6h-6zM1290.4 1071h6v6h-6zM1302.4 1059h6v6h-6zM1308.4 1059h6v6h-6zM1308.4 1065h6v6h-6zM1326.4 1071h6v6h-6zM1356.4 1059h6v6h-6zM1356.4 1065h6v6h-6zM1356.4 1071h6v6h-6zM900.4 1131h6v6h-6zM900.4 1137h6v6h-6zM912.4 1131h6v6h-6zM918.4 1149h6v6h-6zM936.4 1131h6v6h-6zM936.4 1143h6v6h-6zM942.4 1149h6v6h-6zM954.4 1137h6v6h-6zM966.4 1131h6v6h-6zM966.4 1149h6v6h-6zM984.4 1131h6v6h-6zM1002.4 1137h6v6h-6zM1014.4 1143h6v6h-6zM1020.4 1143h6v6h-6zM1026.4 1131h6v6h-6zM1038.4 1143h6v6h-6zM1044.4 1131h6v6h-6zM1044.4 1143h6v6h-6zM1056.4 1143h6v6h-6zM1056.4 1149h6v6h-6zM1062.4 1131h6v6h-6zM1062.4 1149h6v6h-6zM1074.4 1131h6v6h-6zM1074.4 1143h6v6h-6zM1080.4 1137h6v6h-6zM1086.4 1131h6v6h-6zM1104.4 1137h6v6h-6zM1110.4 1137h6v6h-6zM1176.4 1131h6v6h-6zM1194.4 1131h6v6h-6zM1218.4 1131h6v6h-6zM1284.4 1131h6v6h-6zM1296.4 1137h6v6h-6zM1314.4 1131h6v6h-6zM1314.4 1137h6v6h-6zM1332.4 1137h6v6h-6zM1344.4 1131h6v6h-6zM1344.4 1137h6v6h-6zM1350.4 1131h6v6h-6zM1350.4 1137h6v6h-6zM900.4 1221h6v6h-6zM906.4 1203h6v6h-6zM918.4 1203h6v6h-6zM918.4 1221h6v6h-6zM948.4 1215h6v6h-6zM954.4 1203h6v6h-6zM960.4 1203h6v6h-6zM1002.4 1203h6v6h-6zM1020.4 1209h6v6h-6zM1038.4 1203h6v6h-6zM1038.4 1215h6v6h-6zM1044.4 1215h6v6h-6zM1050.4 1209h6v6h-6zM1062.4 1203h6v6h-6zM1068.4 1209h6v6h-6zM1068.4 1215h6v6h-6zM1074.4 1221h6v6h-6zM1080.4 1203h6v6h-6zM1086.4 1215h6v6h-6zM1110.4 1203h6v6h-6zM1110.4 1209h6v6h-6zM1116.4 1209h6v6h-6zM1164.4 1209h6v6h-6zM1164.4 1215h6v6h-6zM1170.4 1209h6v6h-6zM1182.4 1209h6v6h-6zM1188.4 1209h6v6h-6zM1188.4 1215h6v6h-6zM1200.4 1215h6v6h-6zM1206.4 1203h6v6h-6zM1212.4 1215h6v6h-6zM1242.4 1203h6v6h-6zM1248.4 1215h6v6h-6zM1278.4 1203h6v6h-6zM1320.4 1215h6v6h-6zM1326.4 1203h6v6h-6zM1326.4 1209h6v6h-6zM1338.4 1215h6v6h-6zM906.4 1281h6v6h-6zM912.4 1281h6v6h-6zM924.4 1275h6v6h-6zM936.4 1287h6v6h-6zM948.4 1275h6v6h-6zM948.4 1281h6v6h-6zM954.4 1293h6v6h-6zM960.4 1281h6v6h-6zM960.4 1287h6v6h-6zM972.4 1281h6v6h-6zM984.4 1287h6v6h-6zM996.4 1281h6v6h-6zM1002.4 1287h6v6h-6zM1020.4 1275h6v6h-6zM1020.4 1287h6v6h-6zM1020.4 1293h6v6h-6zM1026.4 1287h6v6h-6zM1026.4 1293h6v6h-6zM1038.4 1287h6v6h-6zM1056.4 1293h6v6h-6zM1068.4 1275h6v6h-6zM1074.4 1275h6v6h-6zM1074.4 1281h6v6h-6zM1074.4 1287h6v6h-6zM1086.4 1293h6v6h-6zM1116.4 1275h6v6h-6zM1152.4 1287h6v6h-6zM1164.4 1287h6v6h-6zM1176.4 1275h6v6h-6zM1188.4 1287h6v6h-6zM1194.4 1281h6v6h-6zM1200.4 1287h6v6h-6zM1218.4 1287h6v6h-6zM1236.4 1275h6v6h-6zM1254.4 1287h6v6h-6zM1260.4 1275h6v6h-6zM1338.4 1287h6v6h-6zM1344.4 1287h6v6h-6zM1350.4 1287h6v6h-6zM1356.4 1275h6v6h-6z"/><path fill-opacity="0.2" d="M900.4 339h6v6h-6zM912.4 351h6v6h-6zM924.4 339h6v6h-6zM924.4 351h6v6h-6zM942.4 357h6v6h-6zM1002.4 351h6v6h-6zM1080.4 351h6v6h-6zM1296.4 339h6v6h-6zM1302.4 351h6v6h-6zM1314.4 339h6v6h-6zM1314.4 351h6v6h-6zM1338.4 339h6v6h-6zM1338.4 351h6v6h-6zM1344.4 351h6v6h-6zM942.4 411h6v6h-6zM972.4 411h6v6h-6zM972.4 423h6v6h-6zM978.4 411h6v6h-6zM1014.4 411h6v6h-6zM1020.4 411h6v6h-6zM1026.4 411h6v6h-6zM1044.4 411h6v6h-6zM1056.4 411h6v6h-6zM1062.4 429h6v6h-6zM1086.4 411h6v6h-6zM1242.4 423h6v6h-6zM1308.4 411h6v6h-6zM1308.4 417h6v6h-6zM1314.4 423h6v6h-6zM1338.4 411h6v6h-6zM1344.4 411h6v6h-6zM1356.4 417h6v6h-6zM906.4 501h6v6h-6zM948.4 483h6v6h-6zM954.4 483h6v6h-6zM966.4 483h6v6h-6zM978.4 483h6v6h-6zM1026.4 483h6v6h-6zM1032.4 483h6v6h-6zM1056.4 501h6v6h-6zM1080.4 501h6v6h-6zM1182.4 489h6v6h-6zM1320.4 489h6v6h-6zM1326.4 483h6v6h-6zM918.4 555h6v6h-6zM924.4 555h6v6h-6zM966.4 555h6v6h-6zM1002.4 555h6v6h-6zM1020.4 555h6v6h-6zM1020.4 567h6v6h-6zM1026.4 561h6v6h-6zM1026.4 567h6v6h-6zM1062.4 555h6v6h-6zM1086.4 555h6v6h-6zM1092.4 555h6v6h-6zM900.4 627h6v6h-6zM900.4 633h6v6h-6zM912.4 627h6v6h-6zM978.4 627h6v6h-6zM990.4 645h6v6h-6zM1002.4 627h6v6h-6zM1008.4 627h6v6h-6zM1020.4 627h6v6h-6zM1038.4 627h6v6h-6zM1062.4 627h6v6h-6zM1302.4 633h6v6h-6zM1332.4 627h6v6h-6zM1338.4 639h6v6h-6zM1344.4 627h6v6h-6zM1344.4 633h6v6h-6zM900.4 699h6v6h-6zM918.4 699h6v6h-6zM924.4 711h6v6h-6zM1002.4 699h6v6h-6zM1008.4 699h6v6h-6zM1062.4 699h6v6h-6zM1080.4 717h6v6h-6zM1200.4 705h6v6h-6zM1218.4 699h6v6h-6zM1218.4 711h6v6h-6zM1230.4 705h6v6h-6zM1242.4 705h6v6h-6zM1314.4 699h6v6h-6zM1320.4 705h6v6h-6zM1326.4 711h6v6h-6zM1332.4 705h6v6h-6zM1350.4 705h6v6h-6zM1356.4 699h6v6h-6zM1356.4 711h6v6h-6zM1362.4 699h6v6h-6zM990.4 771h6v6h-6zM1008.4 771h6v6h-6zM1026.4 789h6v6h-6zM1032.4 771h6v6h-6zM1044.4 771h6v6h-6zM1062.4 789h6v6h-6zM1080.4 771h6v6h-6zM1332.4 771h6v6h-6zM1344.4 771h6v6h-6zM1344.4 777h6v6h-6zM1344.4 783h6v6h-6zM912.4 843h6v6h-6zM942.4 861h6v6h-6zM948.4 843h6v6h-6zM1020.4 843h6v6h-6zM1062.4 843h6v6h-6zM1062.4 849h6v6h-6zM1170.4 843h6v6h-6zM1320.4 843h6v6h-6zM1320.4 855h6v6h-6zM1326.4 843h6v6h-6zM1332.4 843h6v6h-6zM1332.4 855h6v6h-6zM1338.4 849h6v6h-6zM1344.4 843h6v6h-6zM900.4 915h6v6h-6zM912.4 915h6v6h-6zM918.4 915h6v6h-6zM936.4 915h6v6h-6zM984.4 921h6v6h-6zM990.4 915h6v6h-6zM1032.4 921h6v6h-6zM1038.4 915h6v6h-6zM1050.4 915h6v6h-6zM1068.4 927h6v6h-6zM1194.4 927h6v6h-6zM1212.4 921h6v6h-6zM1236.4 927h6v6h-6zM1284.4 915h6v6h-6zM1284.4 927h6v6h-6zM1302.4 915h6v6h-6zM1308.4 921h6v6h-6zM1314.4 915h6v6h-6zM1314.4 921h6v6h-6zM900.4 987h6v6h-6zM912.4 987h6v6h-6zM936.4 987h6v6h-6zM960.4 993h6v6h-6zM972.4 987h6v6h-6zM996.4 987h6v6h-6zM1002.4 987h6v6h-6zM1014.4 987h6v6h-6zM1074.4 987h6v6h-6zM1086.4 987h6v6h-6zM1086.4 999h6v6h-6zM1098.4 993h6v6h-6zM1164.4 993h6v6h-6zM1188.4 999h6v6h-6zM1194.4 987h6v6h-6zM1206.4 999h6v6h-6zM1236.4 999h6v6h-6zM1242.4 993h6v6h-6zM1242.4 999h6v6h-6zM1248.4 987h6v6h-6zM1272.4 999h6v6h-6zM1284.4 999h6v6h-6zM1338.4 999h6v6h-6zM1356.4 993h6v6h-6zM912.4 1059h6v6h-6zM936.4 1059h6v6h-6zM972.4 1059h6v6h-6zM1002.4 1059h6v6h-6zM1008.4 1059h6v6h-6zM1014.4 1059h6v6h-6zM1050.4 1059h6v6h-6zM1350.4 1065h6v6h-6zM1350.4 1071h6v6h-6zM954.4 1131h6v6h-6zM978.4 1143h6v6h-6zM996.4 1131h6v6h-6zM1020.4 1131h6v6h-6zM1152.4 1137h6v6h-6zM1158.4 1131h6v6h-6zM1158.4 1143h6v6h-6zM1170.4 1143h6v6h-6zM1176.4 1137h6v6h-6zM1212.4 1137h6v6h-6zM1212.4 1143h6v6h-6zM1224.4 1137h6v6h-6zM1248.4 1131h6v6h-6zM1248.4 1143h6v6h-6zM1254.4 1137h6v6h-6zM1254.4 1143h6v6h-6zM1266.4 1137h6v6h-6zM1266.4 1143h6v6h-6zM1278.4 1131h6v6h-6zM1296.4 1131h6v6h-6zM1296.4 1143h6v6h-6zM1308.4 1137h6v6h-6zM1338.4 1131h6v6h-6zM1338.4 1137h6v6h-6zM1338.4 1143h6v6h-6zM912.4 1215h6v6h-6zM966.4 1203h6v6h-6zM972.4 1203h6v6h-6zM984.4 1215h6v6h-6zM1020.4 1215h6v6h-6zM1026.4 1209h6v6h-6zM1044.4 1221h6v6h-6zM1050.4 1203h6v6h-6zM1068.4 1203h6v6h-6zM1068.4 1221h6v6h-6zM1152.4 1215h6v6h-6zM1158.4 1215h6v6h-6zM1182.4 1203h6v6h-6zM1230.4 1215h6v6h-6zM1236.4 1215h6v6h-6zM1260.4 1203h6v6h-6zM1266.4 1203h6v6h-6zM1308.4 1203h6v6h-6zM1320.4 1209h6v6h-6zM1344.4 1203h6v6h-6zM1350.4 1209h6v6h-6zM1356.4 1209h6v6h-6zM1356.4 1215h6v6h-6zM900.4 1275h6v6h-6zM924.4 1281h6v6h-6zM1020.4 1281h6v6h-6zM1026.4 1281h6v6h-6zM1050.4 1275h6v6h-6zM1056.4 1275h6v6h-6zM1092.4 1275h6v6h-6zM1152.4 1281h6v6h-6zM1212.4 1275h6v6h-6zM1212.4 1281h6v6h-6zM1212.4 1287h6v6h-6zM1260.4 1281h6v6h-6zM1332.4 1275h6v6h-6zM1332.4 1281h6v6h-6zM1338.4 1281h6v6h-6z"/><path fill-opacity="0.3" d="M900.4 351h6v6h-6zM918.4 351h6v6h-6zM924.4 345h6v6h-6zM954.4 345h6v6h-6zM966.4 345h6v6h-6zM978.4 351h6v6h-6zM990.4 339h6v6h-6zM1002.4 357h6v6h-6zM1020.4 339h6v6h-6zM1026.4 345h6v6h-6zM1074.4 345h6v6h-6zM1080.4 345h6v6h-6zM1158.4 345h6v6h-6zM1170.4 339h6v6h-6zM1188.4 339h6v6h-6zM1212.4 351h6v6h-6zM1248.4 345h6v6h-6zM1308.4 345h6v6h-6zM1332.4 351h6v6h-6zM1338.4 345h6v6h-6zM1344.4 339h6v6h-6zM1344.4 345h6v6h-6zM900.4 411h6v6h-6zM948.4 417h6v6h-6zM960.4 417h6v6h-6zM990.4 411h6v6h-6zM996.4 417h6v6h-6zM996.4 423h6v6h-6zM1014.4 423h6v6h-6zM1032.4 411h6v6h-6zM1038.4 417h6v6h-6zM1038.4 423h6v6h-6zM1044.4 417h6v6h-6zM1062.4 411h6v6h-6zM1068.4 411h6v6h-6zM1080.4 411h6v6h-6zM1152.4 423h6v6h-6zM1176.4 417h6v6h-6zM1176.4 423h6v6h-6zM1188.4 411h6v6h-6zM1206.4 423h6v6h-6zM1212.4 417h6v6h-6zM1248.4 411h6v6h-6zM1260.4 411h6v6h-6zM1308.4 423h6v6h-6zM1314.4 417h6v6h-6zM1320.4 411h6v6h-6zM1320.4 417h6v6h-6zM1326.4 411h6v6h-6zM1326.4 417h6v6h-6zM1332.4 417h6v6h-6zM906.4 495h6v6h-6zM918.4 489h6v6h-6zM942.4 489h6v6h-6zM996.4 489h6v6h-6zM996.4 495h6v6h-6zM1008.4 483h6v6h-6zM1044.4 489h6v6h-6zM1050.4 483h6v6h-6zM1062.4 495h6v6h-6zM1152.4 483h6v6h-6zM1158.4 483h6v6h-6zM1200.4 489h6v6h-6zM1206.4 489h6v6h-6zM1206.4 495h6v6h-6zM1242.4 489h6v6h-6zM1266.4 489h6v6h-6zM1296.4 489h6v6h-6zM1296.4 495h6v6h-6zM1308.4 483h6v6h-6zM1308.4 489h6v6h-6zM900.4 561h6v6h-6zM906.4 561h6v6h-6zM906.4 567h6v6h-6zM972.4 561h6v6h-6zM984.4 561h6v6h-6zM1044.4 555h6v6h-6zM1044.4 561h6v6h-6zM1044.4 567h6v6h-6zM1050.4 567h6v6h-6zM1056.4 555h6v6h-6zM1056.4 561h6v6h-6zM1080.4 561h6v6h-6zM1152.4 561h6v6h-6zM1158.4 561h6v6h-6zM1176.4 567h6v6h-6zM1188.4 561h6v6h-6zM1206.4 561h6v6h-6zM1218.4 567h6v6h-6zM1254.4 555h6v6h-6zM1260.4 561h6v6h-6zM1278.4 555h6v6h-6zM1290.4 561h6v6h-6zM1290.4 567h6v6h-6zM1308.4 567h6v6h-6zM936.4 633h6v6h-6zM966.4 627h6v6h-6zM1014.4 639h6v6h-6zM1020.4 633h6v6h-6zM1026.4 639h6v6h-6zM1080.4 639h6v6h-6zM1158.4 627h6v6h-6zM1194.4 627h6v6h-6zM1206.4 633h6v6h-6zM1230.4 627h6v6h-6zM1230.4 639h6v6h-6zM1248.4 627h6v6h-6zM1254.4 633h6v6h-6zM1266.4 627h6v6h-6zM1266.4 633h6v6h-6zM1284.4 633h6v6h-6zM1308.4 639h6v6h-6zM1320.4 633h6v6h-6zM894.4 699h6v6h-6zM918.4 711h6v6h-6zM924.4 705h6v6h-6zM930.4 711h6v6h-6zM960.4 705h6v6h-6zM966.4 705h6v6h-6zM984.4 711h6v6h-6zM996.4 711h6v6h-6zM1014.4 705h6v6h-6zM1050.4 699h6v6h-6zM1080.4 699h6v6h-6zM1080.4 711h6v6h-6zM1086.4 705h6v6h-6zM1146.4 699h6v6h-6zM1146.4 711h6v6h-6zM1164.4 705h6v6h-6zM1176.4 711h6v6h-6zM1194.4 699h6v6h-6zM1206.4 699h6v6h-6zM1206.4 711h6v6h-6zM1218.4 705h6v6h-6zM1230.4 699h6v6h-6zM1260.4 699h6v6h-6zM1266.4 699h6v6h-6zM1302.4 705h6v6h-6zM1314.4 705h6v6h-6zM1314.4 711h6v6h-6zM1332.4 699h6v6h-6zM1338.4 705h6v6h-6zM1338.4 711h6v6h-6zM906.4 771h6v6h-6zM918.4 771h6v6h-6zM942.4 783h6v6h-6zM948.4 783h6v6h-6zM954.4 783h6v6h-6zM984.4 771h6v6h-6zM996.4 777h6v6h-6zM1020.4 777h6v6h-6zM1032.4 777h6v6h-6zM1080.4 777h6v6h-6zM1170.4 771h6v6h-6zM1200.4 777h6v6h-6zM1212.4 783h6v6h-6zM1224.4 777h6v6h-6zM1248.4 777h6v6h-6zM1254.4 777h6v6h-6zM1290.4 783h6v6h-6zM1296.4 777h6v6h-6zM1308.4 771h6v6h-6zM1314.4 777h6v6h-6zM1320.4 783h6v6h-6zM1332.4 783h6v6h-6zM960.4 843h6v6h-6zM972.4 849h6v6h-6zM990.4 843h6v6h-6zM1014.4 855h6v6h-6zM1038.4 843h6v6h-6zM1056.4 855h6v6h-6zM1062.4 855h6v6h-6zM1068.4 849h6v6h-6zM1152.4 843h6v6h-6zM1158.4 849h6v6h-6zM1164.4 855h6v6h-6zM1176.4 843h6v6h-6zM1176.4 849h6v6h-6zM1176.4 855h6v6h-6zM1188.4 849h6v6h-6zM1194.4 849h6v6h-6zM1200.4 843h6v6h-6zM1200.4 849h6v6h-6zM1200.4 855h6v6h-6zM1212.4 849h6v6h-6zM1218.4 855h6v6h-6zM1230.4 849h6v6h-6zM1230.4 855h6v6h-6zM1242.4 843h6v6h-6zM1260.4 855h6v6h-6zM1326.4 849h6v6h-6zM1332.4 849h6v6h-6zM936.4 927h6v6h-6zM948.4 921h6v6h-6zM990.4 921h6v6h-6zM996.4 927h6v6h-6zM1002.4 921h6v6h-6zM1038.4 927h6v6h-6zM1044.4 921h6v6h-6zM1050.4 921h6v6h-6zM1056.4 921h6v6h-6zM1062.4 921h6v6h-6zM1080.4 921h6v6h-6zM1158.4 927h6v6h-6zM1176.4 927h6v6h-6zM1182.4 915h6v6h-6zM1182.4 921h6v6h-6zM1188.4 927h6v6h-6zM1206.4 927h6v6h-6zM1212.4 927h6v6h-6zM1236.4 921h6v6h-6zM900.4 999h6v6h-6zM918.4 993h6v6h-6zM954.4 993h6v6h-6zM966.4 993h6v6h-6zM972.4 993h6v6h-6zM990.4 999h6v6h-6zM1008.4 993h6v6h-6zM1014.4 999h6v6h-6zM1026.4 987h6v6h-6zM1026.4 1005h6v6h-6zM1050.4 999h6v6h-6zM1098.4 987h6v6h-6zM1152.4 993h6v6h-6zM1164.4 987h6v6h-6zM1248.4 993h6v6h-6zM1254.4 987h6v6h-6zM1254.4 999h6v6h-6zM1284.4 993h6v6h-6zM1290.4 999h6v6h-6zM1314.4 987h6v6h-6zM1320.4 987h6v6h-6zM1350.4 999h6v6h-6zM918.4 1065h6v6h-6zM948.4 1059h6v6h-6zM954.4 1065h6v6h-6zM972.4 1065h6v6h-6zM996.4 1059h6v6h-6zM996.4 1065h6v6h-6zM1002.4 1071h6v6h-6zM1020.4 1059h6v6h-6zM1020.4 1065h6v6h-6zM1044.4 1071h6v6h-6zM1062.4 1071h6v6h-6zM1074.4 1071h6v6h-6zM1158.4 1059h6v6h-6zM1158.4 1065h6v6h-6zM1170.4 1071h6v6h-6zM1194.4 1059h6v6h-6zM1218.4 1059h6v6h-6zM1224.4 1065h6v6h-6zM1248.4 1059h6v6h-6zM1272.4 1065h6v6h-6zM1278.4 1065h6v6h-6zM1302.4 1071h6v6h-6zM1314.4 1059h6v6h-6zM1314.4 1065h6v6h-6zM1332.4 1059h6v6h-6zM906.4 1131h6v6h-6zM954.4 1143h6v6h-6zM960.4 1131h6v6h-6zM960.4 1143h6v6h-6zM972.4 1131h6v6h-6zM978.4 1131h6v6h-6zM978.4 1137h6v6h-6zM990.4 1137h6v6h-6zM990.4 1143h6v6h-6zM1008.4 1137h6v6h-6zM1014.4 1131h6v6h-6zM1038.4 1131h6v6h-6zM1038.4 1137h6v6h-6zM1074.4 1137h6v6h-6zM1170.4 1131h6v6h-6zM1176.4 1143h6v6h-6zM1194.4 1137h6v6h-6zM1200.4 1137h6v6h-6zM1242.4 1137h6v6h-6zM1242.4 1143h6v6h-6zM1260.4 1137h6v6h-6zM1284.4 1137h6v6h-6zM1284.4 1143h6v6h-6zM1290.4 1131h6v6h-6zM1302.4 1131h6v6h-6zM1302.4 1143h6v6h-6zM1314.4 1143h6v6h-6zM1332.4 1131h6v6h-6zM1332.4 1143h6v6h-6zM906.4 1209h6v6h-6zM918.4 1215h6v6h-6zM924.4 1209h6v6h-6zM936.4 1203h6v6h-6zM936.4 1215h6v6h-6zM942.4 1203h6v6h-6zM948.4 1203h6v6h-6zM1044.4 1203h6v6h-6zM1056.4 1203h6v6h-6zM1056.4 1215h6v6h-6zM1062.4 1209h6v6h-6zM1062.4 1215h6v6h-6zM1080.4 1209h6v6h-6zM1086.4 1209h6v6h-6zM1152.4 1209h6v6h-6zM1206.4 1209h6v6h-6zM1206.4 1215h6v6h-6zM1218.4 1203h6v6h-6zM1230.4 1209h6v6h-6zM1254.4 1209h6v6h-6zM1266.4 1215h6v6h-6zM1296.4 1203h6v6h-6zM1296.4 1209h6v6h-6zM1320.4 1203h6v6h-6zM1344.4 1209h6v6h-6zM1356.4 1203h6v6h-6zM1362.4 1215h6v6h-6zM912.4 1275h6v6h-6zM918.4 1275h6v6h-6zM918.4 1281h6v6h-6zM948.4 1287h6v6h-6zM960.4 1275h6v6h-6zM966.4 1281h6v6h-6zM966.4 1287h6v6h-6zM984.4 1281h6v6h-6zM996.4 1275h6v6h-6zM1002.4 1275h6v6h-6zM1044.4 1281h6v6h-6zM1050.4 1281h6v6h-6zM1056.4 1281h6v6h-6zM1062.4 1281h6v6h-6zM1158.4 1281h6v6h-6zM1164.4 1281h6v6h-6zM1176.4 1281h6v6h-6zM1194.4 1275h6v6h-6zM1200.4 1275h6v6h-6zM1230.4 1281h6v6h-6zM1230.4 1287h6v6h-6zM1242.4 1287h6v6h-6zM1254.4 1275h6v6h-6zM1254.4 1281h6v6h-6zM1272.4 1287h6v6h-6zM1278.4 1287h6v6h-6zM1284.4 1281h6v6h-6zM1302.4 1281h6v6h-6zM1302.4 1287h6v6h-6zM1314.4 1275h6v6h-6zM1314.4 1287h6v6h-6zM1326.4 1275h6v6h-6z"/><path fill-opacity="0.4" d="M912.4 357h6v6h-6zM918.4 339h6v6h-6zM918.4 345h6v6h-6zM942.4 339h6v6h-6zM954.4 339h6v6h-6zM960.4 339h6v6h-6zM990.4 345h6v6h-6zM1020.4 351h6v6h-6zM1152.4 351h6v6h-6zM1164.4 339h6v6h-6zM1164.4 351h6v6h-6zM1176.4 351h6v6h-6zM1218.4 345h6v6h-6zM1218.4 351h6v6h-6zM900.4 423h6v6h-6zM1002.4 429h6v6h-6zM1014.4 429h6v6h-6zM1026.4 417h6v6h-6zM1050.4 417h6v6h-6zM1050.4 423h6v6h-6zM1074.4 423h6v6h-6zM1086.4 417h6v6h-6zM1188.4 417h6v6h-6zM1188.4 423h6v6h-6zM1242.4 411h6v6h-6zM1314.4 411h6v6h-6zM900.4 495h6v6h-6zM960.4 489h6v6h-6zM972.4 495h6v6h-6zM1032.4 495h6v6h-6zM1050.4 489h6v6h-6zM1062.4 489h6v6h-6zM1068.4 489h6v6h-6zM1074.4 489h6v6h-6zM1086.4 495h6v6h-6zM1170.4 489h6v6h-6zM1176.4 495h6v6h-6zM1278.4 483h6v6h-6zM1296.4 483h6v6h-6zM900.4 567h6v6h-6zM1080.4 567h6v6h-6zM1086.4 561h6v6h-6zM1152.4 555h6v6h-6zM1158.4 555h6v6h-6zM1188.4 555h6v6h-6zM1188.4 567h6v6h-6zM1206.4 555h6v6h-6zM1266.4 555h6v6h-6zM1296.4 567h6v6h-6zM900.4 639h6v6h-6zM924.4 639h6v6h-6zM978.4 639h6v6h-6zM990.4 627h6v6h-6zM1014.4 645h6v6h-6zM1044.4 627h6v6h-6zM1062.4 645h6v6h-6zM1074.4 639h6v6h-6zM1080.4 633h6v6h-6zM1152.4 627h6v6h-6zM1164.4 633h6v6h-6zM1164.4 639h6v6h-6zM1194.4 639h6v6h-6zM1206.4 627h6v6h-6zM1224.4 627h6v6h-6zM1224.4 639h6v6h-6zM1236.4 627h6v6h-6zM1236.4 639h6v6h-6zM1278.4 627h6v6h-6zM1278.4 633h6v6h-6zM1314.4 639h6v6h-6zM1326.4 639h6v6h-6zM900.4 705h6v6h-6zM942.4 711h6v6h-6zM948.4 705h6v6h-6zM966.4 711h6v6h-6zM990.4 711h6v6h-6zM1002.4 705h6v6h-6zM1002.4 711h6v6h-6zM1068.4 705h6v6h-6zM1068.4 711h6v6h-6zM1092.4 717h6v6h-6zM1152.4 705h6v6h-6zM1158.4 711h6v6h-6zM1164.4 699h6v6h-6zM1182.4 699h6v6h-6zM1188.4 711h6v6h-6zM1200.4 711h6v6h-6zM1206.4 705h6v6h-6zM1236.4 711h6v6h-6zM1248.4 705h6v6h-6zM1296.4 699h6v6h-6zM1320.4 699h6v6h-6zM1338.4 699h6v6h-6zM912.4 777h6v6h-6zM942.4 777h6v6h-6zM966.4 789h6v6h-6zM978.4 783h6v6h-6zM1008.4 783h6v6h-6zM1044.4 777h6v6h-6zM1068.4 777h6v6h-6zM1152.4 777h6v6h-6zM1152.4 783h6v6h-6zM1158.4 783h6v6h-6zM1164.4 783h6v6h-6zM1182.4 777h6v6h-6zM1194.4 783h6v6h-6zM1212.4 777h6v6h-6zM1230.4 777h6v6h-6zM1266.4 777h6v6h-6zM900.4 855h6v6h-6zM906.4 849h6v6h-6zM912.4 849h6v6h-6zM954.4 849h6v6h-6zM960.4 849h6v6h-6zM966.4 849h6v6h-6zM984.4 861h6v6h-6zM996.4 855h6v6h-6zM1014.4 849h6v6h-6zM1026.4 855h6v6h-6zM1032.4 861h6v6h-6zM1038.4 849h6v6h-6zM1044.4 861h6v6h-6zM1080.4 855h6v6h-6zM1086.4 855h6v6h-6zM1152.4 849h6v6h-6zM1158.4 843h6v6h-6zM1158.4 855h6v6h-6zM1170.4 849h6v6h-6zM1194.4 855h6v6h-6zM1224.4 843h6v6h-6zM1278.4 843h6v6h-6zM900.4 921h6v6h-6zM912.4 927h6v6h-6zM918.4 921h6v6h-6zM936.4 921h6v6h-6zM936.4 933h6v6h-6zM942.4 927h6v6h-6zM954.4 921h6v6h-6zM960.4 921h6v6h-6zM966.4 927h6v6h-6zM1044.4 915h6v6h-6zM1044.4 927h6v6h-6zM1050.4 927h6v6h-6zM1086.4 921h6v6h-6zM1086.4 927h6v6h-6zM1230.4 921h6v6h-6zM906.4 987h6v6h-6zM906.4 1005h6v6h-6zM918.4 987h6v6h-6zM936.4 993h6v6h-6zM948.4 999h6v6h-6zM954.4 987h6v6h-6zM978.4 993h6v6h-6zM984.4 993h6v6h-6zM990.4 993h6v6h-6zM1032.4 993h6v6h-6zM1062.4 993h6v6h-6zM1086.4 993h6v6h-6zM1092.4 993h6v6h-6zM1098.4 999h6v6h-6zM1104.4 993h6v6h-6zM1158.4 987h6v6h-6zM1194.4 999h6v6h-6zM1230.4 987h6v6h-6zM1242.4 987h6v6h-6zM1272.4 993h6v6h-6zM1296.4 993h6v6h-6zM1314.4 993h6v6h-6zM900.4 1065h6v6h-6zM918.4 1071h6v6h-6zM942.4 1065h6v6h-6zM960.4 1065h6v6h-6zM960.4 1071h6v6h-6zM984.4 1065h6v6h-6zM990.4 1065h6v6h-6zM990.4 1071h6v6h-6zM996.4 1071h6v6h-6zM1008.4 1065h6v6h-6zM1014.4 1071h6v6h-6zM1020.4 1071h6v6h-6zM1038.4 1071h6v6h-6zM1050.4 1065h6v6h-6zM1050.4 1077h6v6h-6zM1086.4 1071h6v6h-6zM1152.4 1065h6v6h-6zM1164.4 1059h6v6h-6zM1194.4 1071h6v6h-6zM1200.4 1059h6v6h-6zM1200.4 1065h6v6h-6zM1224.4 1059h6v6h-6zM1230.4 1071h6v6h-6zM1242.4 1059h6v6h-6zM1242.4 1071h6v6h-6zM1272.4 1071h6v6h-6zM1290.4 1059h6v6h-6zM1296.4 1071h6v6h-6zM900.4 1143h6v6h-6zM948.4 1149h6v6h-6zM966.4 1137h6v6h-6zM966.4 1143h6v6h-6zM978.4 1149h6v6h-6zM984.4 1143h6v6h-6zM1008.4 1143h6v6h-6zM1050.4 1143h6v6h-6zM1080.4 1143h6v6h-6zM1182.4 1137h6v6h-6zM1182.4 1143h6v6h-6zM1218.4 1137h6v6h-6zM1230.4 1143h6v6h-6zM1242.4 1131h6v6h-6zM1290.4 1137h6v6h-6zM1308.4 1131h6v6h-6zM900.4 1209h6v6h-6zM1002.4 1215h6v6h-6zM1074.4 1215h6v6h-6zM1080.4 1221h6v6h-6zM1146.4 1209h6v6h-6zM1164.4 1203h6v6h-6zM1242.4 1209h6v6h-6zM1242.4 1215h6v6h-6zM1254.4 1215h6v6h-6zM1278.4 1209h6v6h-6zM1284.4 1209h6v6h-6zM918.4 1287h6v6h-6zM954.4 1287h6v6h-6zM960.4 1293h6v6h-6zM972.4 1287h6v6h-6zM1038.4 1281h6v6h-6zM1062.4 1275h6v6h-6zM1062.4 1287h6v6h-6zM1068.4 1281h6v6h-6zM1092.4 1287h6v6h-6zM1158.4 1287h6v6h-6zM1164.4 1275h6v6h-6zM1170.4 1287h6v6h-6zM1188.4 1275h6v6h-6zM1188.4 1281h6v6h-6zM1206.4 1275h6v6h-6zM1206.4 1287h6v6h-6zM1230.4 1275h6v6h-6zM1296.4 1275h6v6h-6zM1332.4 1287h6v6h-6z"/><path fill-opacity="0.5" d="M906.4 345h6v6h-6zM954.4 351h6v6h-6zM978.4 345h6v6h-6zM1014.4 345h6v6h-6zM1020.4 345h6v6h-6zM1044.4 345h6v6h-6zM1074.4 351h6v6h-6zM1152.4 339h6v6h-6zM1176.4 345h6v6h-6zM996.4 411h6v6h-6zM1050.4 429h6v6h-6zM1248.4 417h6v6h-6zM1254.4 411h6v6h-6zM1254.4 417h6v6h-6zM900.4 489h6v6h-6zM918.4 495h6v6h-6zM948.4 489h6v6h-6zM984.4 489h6v6h-6zM1002.4 483h6v6h-6zM1086.4 501h6v6h-6zM1272.4 495h6v6h-6zM906.4 573h6v6h-6zM912.4 567h6v6h-6zM924.4 561h6v6h-6zM924.4 567h6v6h-6zM960.4 555h6v6h-6zM1044.4 573h6v6h-6zM1068.4 561h6v6h-6zM1218.4 561h6v6h-6zM1260.4 567h6v6h-6zM1284.4 555h6v6h-6zM1290.4 555h6v6h-6zM906.4 633h6v6h-6zM912.4 639h6v6h-6zM924.4 633h6v6h-6zM960.4 639h6v6h-6zM972.4 645h6v6h-6zM996.4 633h6v6h-6zM1002.4 633h6v6h-6zM1008.4 633h6v6h-6zM1014.4 633h6v6h-6zM1020.4 639h6v6h-6zM1026.4 645h6v6h-6zM1062.4 639h6v6h-6zM1068.4 633h6v6h-6zM1074.4 633h6v6h-6zM1164.4 627h6v6h-6zM1212.4 627h6v6h-6zM1212.4 639h6v6h-6zM1284.4 639h6v6h-6zM924.4 699h6v6h-6zM984.4 699h6v6h-6zM1074.4 711h6v6h-6zM1146.4 705h6v6h-6zM1158.4 705h6v6h-6zM1164.4 711h6v6h-6zM1188.4 699h6v6h-6zM1194.4 711h6v6h-6zM1224.4 699h6v6h-6zM1224.4 705h6v6h-6zM1224.4 711h6v6h-6zM1230.4 711h6v6h-6zM1236.4 699h6v6h-6zM1242.4 699h6v6h-6zM1242.4 711h6v6h-6zM1248.4 699h6v6h-6zM1260.4 705h6v6h-6zM1266.4 705h6v6h-6zM1296.4 705h6v6h-6zM1308.4 711h6v6h-6zM1326.4 705h6v6h-6zM906.4 783h6v6h-6zM918.4 777h6v6h-6zM960.4 771h6v6h-6zM1014.4 771h6v6h-6zM1014.4 789h6v6h-6zM1026.4 771h6v6h-6zM1038.4 789h6v6h-6zM1062.4 771h6v6h-6zM1074.4 789h6v6h-6zM1086.4 771h6v6h-6zM1194.4 771h6v6h-6zM1206.4 771h6v6h-6zM1224.4 771h6v6h-6zM1290.4 771h6v6h-6zM912.4 855h6v6h-6zM948.4 855h6v6h-6zM954.4 843h6v6h-6zM972.4 843h6v6h-6zM1008.4 843h6v6h-6zM1044.4 843h6v6h-6zM1068.4 855h6v6h-6zM1278.4 849h6v6h-6zM906.4 915h6v6h-6zM906.4 921h6v6h-6zM918.4 933h6v6h-6zM954.4 915h6v6h-6zM972.4 921h6v6h-6zM1032.4 927h6v6h-6zM1038.4 921h6v6h-6zM1062.4 933h6v6h-6zM1074.4 915h6v6h-6zM1188.4 915h6v6h-6zM1212.4 915h6v6h-6zM1218.4 921h6v6h-6zM918.4 999h6v6h-6zM924.4 993h6v6h-6zM966.4 1005h6v6h-6zM1008.4 987h6v6h-6zM1032.4 987h6v6h-6zM1056.4 987h6v6h-6zM1092.4 999h6v6h-6zM1110.4 993h6v6h-6zM1110.4 999h6v6h-6zM1158.4 999h6v6h-6zM1170.4 987h6v6h-6zM1176.4 999h6v6h-6zM1188.4 987h6v6h-6zM1206.4 993h6v6h-6zM1218.4 993h6v6h-6zM1230.4 993h6v6h-6zM1266.4 993h6v6h-6zM1296.4 999h6v6h-6zM1302.4 987h6v6h-6zM1302.4 999h6v6h-6zM1332.4 987h6v6h-6zM1332.4 999h6v6h-6zM900.4 1071h6v6h-6zM918.4 1059h6v6h-6zM1038.4 1059h6v6h-6zM1038.4 1065h6v6h-6zM1068.4 1059h6v6h-6zM1074.4 1065h6v6h-6zM1080.4 1077h6v6h-6zM1152.4 1071h6v6h-6zM1200.4 1071h6v6h-6zM1206.4 1059h6v6h-6zM1248.4 1071h6v6h-6zM1266.4 1071h6v6h-6zM1296.4 1059h6v6h-6zM900.4 1149h6v6h-6zM984.4 1137h6v6h-6zM984.4 1149h6v6h-6zM1032.4 1131h6v6h-6zM1050.4 1149h6v6h-6zM1146.4 1131h6v6h-6zM1146.4 1143h6v6h-6zM1152.4 1131h6v6h-6zM1158.4 1137h6v6h-6zM1200.4 1143h6v6h-6zM1212.4 1131h6v6h-6zM1230.4 1131h6v6h-6zM1254.4 1131h6v6h-6zM1260.4 1143h6v6h-6zM1278.4 1143h6v6h-6zM1308.4 1143h6v6h-6zM900.4 1215h6v6h-6zM912.4 1203h6v6h-6zM924.4 1215h6v6h-6zM948.4 1209h6v6h-6zM948.4 1221h6v6h-6zM954.4 1209h6v6h-6zM966.4 1215h6v6h-6zM984.4 1209h6v6h-6zM996.4 1203h6v6h-6zM1074.4 1203h6v6h-6zM1146.4 1203h6v6h-6zM1158.4 1203h6v6h-6zM1158.4 1209h6v6h-6zM1170.4 1203h6v6h-6zM1170.4 1215h6v6h-6zM1182.4 1215h6v6h-6zM1218.4 1209h6v6h-6zM1218.4 1215h6v6h-6zM1230.4 1203h6v6h-6zM1248.4 1203h6v6h-6zM1254.4 1203h6v6h-6zM1260.4 1209h6v6h-6zM1284.4 1203h6v6h-6zM1290.4 1203h6v6h-6zM1290.4 1215h6v6h-6zM1308.4 1215h6v6h-6zM1338.4 1209h6v6h-6zM918.4 1293h6v6h-6zM936.4 1275h6v6h-6zM936.4 1293h6v6h-6zM942.4 1281h6v6h-6zM942.4 1287h6v6h-6zM966.4 1275h6v6h-6zM984.4 1275h6v6h-6zM984.4 1293h6v6h-6zM1056.4 1287h6v6h-6zM1062.4 1293h6v6h-6zM1080.4 1281h6v6h-6zM1092.4 1293h6v6h-6zM1170.4 1281h6v6h-6zM1176.4 1287h6v6h-6zM1242.4 1281h6v6h-6zM1296.4 1281h6v6h-6z"/><path fill-opacity="0.6" d="M906.4 351h6v6h-6zM912.4 339h6v6h-6zM942.4 345h6v6h-6zM984.4 339h6v6h-6zM984.4 357h6v6h-6zM996.4 345h6v6h-6zM1044.4 357h6v6h-6zM1164.4 345h6v6h-6zM1194.4 345h6v6h-6zM1236.4 345h6v6h-6zM1254.4 345h6v6h-6zM954.4 429h6v6h-6zM960.4 423h6v6h-6zM966.4 423h6v6h-6zM990.4 417h6v6h-6zM1008.4 423h6v6h-6zM1020.4 423h6v6h-6zM1062.4 417h6v6h-6zM1074.4 411h6v6h-6zM1080.4 423h6v6h-6zM1170.4 411h6v6h-6zM1194.4 411h6v6h-6zM1230.4 411h6v6h-6zM1236.4 417h6v6h-6zM1260.4 417h6v6h-6zM1260.4 423h6v6h-6zM1266.4 411h6v6h-6zM1266.4 417h6v6h-6zM954.4 489h6v6h-6zM966.4 495h6v6h-6zM990.4 495h6v6h-6zM1020.4 495h6v6h-6zM1026.4 495h6v6h-6zM1032.4 489h6v6h-6zM1038.4 501h6v6h-6zM1044.4 495h6v6h-6zM1080.4 483h6v6h-6zM1080.4 495h6v6h-6zM1206.4 483h6v6h-6zM1272.4 489h6v6h-6zM1302.4 489h6v6h-6zM972.4 555h6v6h-6zM996.4 555h6v6h-6zM996.4 567h6v6h-6zM1080.4 555h6v6h-6zM1170.4 555h6v6h-6zM1170.4 567h6v6h-6zM1176.4 561h6v6h-6zM1218.4 555h6v6h-6zM1224.4 555h6v6h-6zM1224.4 561h6v6h-6zM1260.4 555h6v6h-6zM1296.4 561h6v6h-6zM1308.4 555h6v6h-6zM966.4 645h6v6h-6zM1176.4 633h6v6h-6zM1236.4 633h6v6h-6zM1272.4 633h6v6h-6zM1290.4 633h6v6h-6zM1314.4 627h6v6h-6zM1326.4 633h6v6h-6zM906.4 705h6v6h-6zM930.4 705h6v6h-6zM942.4 705h6v6h-6zM948.4 711h6v6h-6zM984.4 705h6v6h-6zM996.4 717h6v6h-6zM1008.4 711h6v6h-6zM1014.4 699h6v6h-6zM1014.4 711h6v6h-6zM1020.4 711h6v6h-6zM1056.4 711h6v6h-6zM1260.4 711h6v6h-6zM1296.4 711h6v6h-6zM936.4 771h6v6h-6zM948.4 777h6v6h-6zM954.4 777h6v6h-6zM984.4 783h6v6h-6zM1008.4 777h6v6h-6zM1014.4 783h6v6h-6zM1020.4 783h6v6h-6zM1050.4 777h6v6h-6zM1260.4 777h6v6h-6zM1290.4 777h6v6h-6zM918.4 849h6v6h-6zM984.4 855h6v6h-6zM990.4 849h6v6h-6zM1002.4 843h6v6h-6zM1008.4 849h6v6h-6zM1020.4 849h6v6h-6zM1026.4 843h6v6h-6zM1038.4 861h6v6h-6zM1044.4 849h6v6h-6zM1050.4 855h6v6h-6zM1056.4 843h6v6h-6zM1056.4 849h6v6h-6zM1074.4 855h6v6h-6zM1152.4 855h6v6h-6zM1218.4 849h6v6h-6zM1224.4 849h6v6h-6zM1242.4 849h6v6h-6zM1248.4 843h6v6h-6zM1248.4 849h6v6h-6zM1254.4 849h6v6h-6zM1254.4 855h6v6h-6zM1272.4 843h6v6h-6zM912.4 921h6v6h-6zM990.4 927h6v6h-6zM996.4 921h6v6h-6zM1002.4 927h6v6h-6zM1008.4 921h6v6h-6zM1068.4 921h6v6h-6zM1152.4 915h6v6h-6zM1152.4 921h6v6h-6zM1158.4 915h6v6h-6zM1164.4 915h6v6h-6zM1176.4 921h6v6h-6zM1194.4 915h6v6h-6zM1206.4 921h6v6h-6zM1218.4 927h6v6h-6zM1242.4 915h6v6h-6zM912.4 993h6v6h-6zM924.4 999h6v6h-6zM936.4 999h6v6h-6zM960.4 987h6v6h-6zM1008.4 999h6v6h-6zM1026.4 993h6v6h-6zM1038.4 993h6v6h-6zM1056.4 999h6v6h-6zM1074.4 999h6v6h-6zM1080.4 999h6v6h-6zM1152.4 999h6v6h-6zM1194.4 993h6v6h-6zM1254.4 993h6v6h-6zM1266.4 987h6v6h-6zM1266.4 999h6v6h-6zM1290.4 987h6v6h-6zM1296.4 987h6v6h-6zM1332.4 993h6v6h-6zM978.4 1059h6v6h-6zM996.4 1077h6v6h-6zM1002.4 1065h6v6h-6zM1026.4 1077h6v6h-6zM1056.4 1059h6v6h-6zM1062.4 1077h6v6h-6zM1068.4 1071h6v6h-6zM1086.4 1059h6v6h-6zM1170.4 1059h6v6h-6zM1194.4 1065h6v6h-6zM1248.4 1065h6v6h-6zM1260.4 1071h6v6h-6zM1278.4 1071h6v6h-6zM1296.4 1065h6v6h-6zM1314.4 1071h6v6h-6zM942.4 1137h6v6h-6zM942.4 1143h6v6h-6zM948.4 1131h6v6h-6zM954.4 1149h6v6h-6zM972.4 1137h6v6h-6zM996.4 1137h6v6h-6zM1020.4 1137h6v6h-6zM1020.4 1149h6v6h-6zM1032.4 1137h6v6h-6zM1044.4 1137h6v6h-6zM1068.4 1149h6v6h-6zM1086.4 1149h6v6h-6zM1218.4 1143h6v6h-6zM1260.4 1131h6v6h-6zM906.4 1215h6v6h-6zM912.4 1209h6v6h-6zM960.4 1209h6v6h-6zM960.4 1215h6v6h-6zM966.4 1209h6v6h-6zM1086.4 1203h6v6h-6zM1092.4 1209h6v6h-6zM1146.4 1215h6v6h-6zM1152.4 1203h6v6h-6zM1188.4 1203h6v6h-6zM1302.4 1215h6v6h-6zM1326.4 1215h6v6h-6zM1344.4 1215h6v6h-6zM906.4 1287h6v6h-6zM912.4 1287h6v6h-6zM942.4 1293h6v6h-6zM996.4 1287h6v6h-6zM1152.4 1275h6v6h-6zM1218.4 1275h6v6h-6zM1218.4 1281h6v6h-6zM1260.4 1287h6v6h-6zM1278.4 1281h6v6h-6zM1290.4 1281h6v6h-6zM1302.4 1275h6v6h-6zM1314.4 1281h6v6h-6zM1320.4 1287h6v6h-6zM1326.4 1281h6v6h-6zM1326.4 1287h6v6h-6z"/><path fill-opacity="0.7" d="M960.4 351h6v6h-6zM960.4 357h6v6h-6zM966.4 339h6v6h-6zM972.4 339h6v6h-6zM984.4 351h6v6h-6zM1038.4 345h6v6h-6zM1170.4 345h6v6h-6zM1188.4 345h6v6h-6zM1212.4 339h6v6h-6zM1230.4 339h6v6h-6zM1236.4 351h6v6h-6zM1242.4 345h6v6h-6zM1242.4 351h6v6h-6zM1248.4 339h6v6h-6zM912.4 423h6v6h-6zM918.4 423h6v6h-6zM972.4 417h6v6h-6zM984.4 411h6v6h-6zM1008.4 417h6v6h-6zM1014.4 417h6v6h-6zM1026.4 423h6v6h-6zM1050.4 411h6v6h-6zM1068.4 417h6v6h-6zM1074.4 417h6v6h-6zM1086.4 423h6v6h-6zM1152.4 417h6v6h-6zM1158.4 411h6v6h-6zM1158.4 417h6v6h-6zM1170.4 423h6v6h-6zM1230.4 423h6v6h-6zM1236.4 423h6v6h-6zM1254.4 423h6v6h-6zM1266.4 423h6v6h-6zM990.4 489h6v6h-6zM1002.4 489h6v6h-6zM1002.4 501h6v6h-6zM1026.4 489h6v6h-6zM1038.4 483h6v6h-6zM1050.4 495h6v6h-6zM1056.4 483h6v6h-6zM1062.4 483h6v6h-6zM1080.4 489h6v6h-6zM1086.4 483h6v6h-6zM1152.4 489h6v6h-6zM1152.4 495h6v6h-6zM1158.4 489h6v6h-6zM1164.4 489h6v6h-6zM1182.4 483h6v6h-6zM1182.4 495h6v6h-6zM1200.4 495h6v6h-6zM1230.4 483h6v6h-6zM1248.4 495h6v6h-6zM1266.4 495h6v6h-6zM1278.4 495h6v6h-6zM1290.4 489h6v6h-6zM918.4 561h6v6h-6zM918.4 567h6v6h-6zM942.4 555h6v6h-6zM942.4 567h6v6h-6zM948.4 561h6v6h-6zM954.4 567h6v6h-6zM996.4 561h6v6h-6zM1038.4 573h6v6h-6zM1056.4 567h6v6h-6zM1062.4 567h6v6h-6zM1068.4 555h6v6h-6zM1164.4 567h6v6h-6zM1194.4 561h6v6h-6zM1194.4 567h6v6h-6zM1200.4 567h6v6h-6zM1224.4 567h6v6h-6zM1230.4 561h6v6h-6zM1242.4 555h6v6h-6zM1248.4 561h6v6h-6zM1278.4 567h6v6h-6zM1284.4 561h6v6h-6zM936.4 645h6v6h-6zM960.4 627h6v6h-6zM1170.4 627h6v6h-6zM1170.4 633h6v6h-6zM1182.4 627h6v6h-6zM1272.4 639h6v6h-6zM1302.4 639h6v6h-6zM894.4 705h6v6h-6zM900.4 711h6v6h-6zM990.4 705h6v6h-6zM996.4 705h6v6h-6zM1008.4 705h6v6h-6zM1020.4 705h6v6h-6zM1056.4 699h6v6h-6zM1056.4 705h6v6h-6zM1062.4 705h6v6h-6zM960.4 783h6v6h-6zM966.4 783h6v6h-6zM972.4 783h6v6h-6zM978.4 771h6v6h-6zM1188.4 771h6v6h-6zM1206.4 777h6v6h-6zM1254.4 771h6v6h-6zM1284.4 771h6v6h-6zM1284.4 777h6v6h-6zM1308.4 777h6v6h-6zM1326.4 771h6v6h-6zM948.4 861h6v6h-6zM954.4 855h6v6h-6zM960.4 855h6v6h-6zM966.4 855h6v6h-6zM978.4 849h6v6h-6zM996.4 849h6v6h-6zM1068.4 843h6v6h-6zM1212.4 855h6v6h-6zM1224.4 855h6v6h-6zM1242.4 855h6v6h-6zM1278.4 855h6v6h-6zM942.4 921h6v6h-6zM954.4 927h6v6h-6zM978.4 921h6v6h-6zM978.4 927h6v6h-6zM1008.4 927h6v6h-6zM1152.4 927h6v6h-6zM1164.4 927h6v6h-6zM1224.4 927h6v6h-6zM948.4 993h6v6h-6zM972.4 999h6v6h-6zM978.4 999h6v6h-6zM984.4 987h6v6h-6zM1068.4 999h6v6h-6zM1080.4 993h6v6h-6zM1218.4 999h6v6h-6zM1272.4 987h6v6h-6zM1284.4 987h6v6h-6zM1326.4 999h6v6h-6zM912.4 1071h6v6h-6zM936.4 1065h6v6h-6zM954.4 1071h6v6h-6zM966.4 1065h6v6h-6zM984.4 1071h6v6h-6zM1032.4 1065h6v6h-6zM1044.4 1065h6v6h-6zM1050.4 1071h6v6h-6zM1068.4 1065h6v6h-6zM1164.4 1065h6v6h-6zM1164.4 1071h6v6h-6zM1182.4 1065h6v6h-6zM1182.4 1071h6v6h-6zM1188.4 1065h6v6h-6zM1218.4 1065h6v6h-6zM1230.4 1065h6v6h-6zM1308.4 1071h6v6h-6zM918.4 1137h6v6h-6zM936.4 1137h6v6h-6zM960.4 1137h6v6h-6zM960.4 1149h6v6h-6zM1014.4 1137h6v6h-6zM1026.4 1143h6v6h-6zM1032.4 1143h6v6h-6zM1050.4 1131h6v6h-6zM1056.4 1137h6v6h-6zM900.4 1203h6v6h-6zM954.4 1215h6v6h-6zM996.4 1209h6v6h-6zM1038.4 1209h6v6h-6zM1056.4 1209h6v6h-6zM954.4 1281h6v6h-6zM972.4 1275h6v6h-6zM1044.4 1287h6v6h-6zM1080.4 1275h6v6h-6zM1086.4 1287h6v6h-6zM1170.4 1275h6v6h-6zM1194.4 1287h6v6h-6zM1242.4 1275h6v6h-6zM1284.4 1275h6v6h-6zM1284.4 1287h6v6h-6zM1290.4 1275h6v6h-6zM1290.4 1287h6v6h-6zM1320.4 1281h6v6h-6z"/><path fill-opacity="0.8" d="M936.4 351h6v6h-6zM936.4 357h6v6h-6zM972.4 345h6v6h-6zM1044.4 339h6v6h-6zM1170.4 351h6v6h-6zM1188.4 351h6v6h-6zM900.4 417h6v6h-6zM906.4 423h6v6h-6zM936.4 423h6v6h-6zM966.4 417h6v6h-6zM978.4 423h6v6h-6zM1002.4 417h6v6h-6zM1068.4 423h6v6h-6zM936.4 495h6v6h-6zM942.4 495h6v6h-6zM954.4 495h6v6h-6zM978.4 489h6v6h-6zM1008.4 489h6v6h-6zM1056.4 489h6v6h-6zM1164.4 483h6v6h-6zM1170.4 483h6v6h-6zM1200.4 483h6v6h-6zM1230.4 495h6v6h-6zM1248.4 483h6v6h-6zM1248.4 489h6v6h-6zM936.4 561h6v6h-6zM936.4 567h6v6h-6zM948.4 555h6v6h-6zM972.4 567h6v6h-6zM1038.4 567h6v6h-6zM1050.4 561h6v6h-6zM1086.4 567h6v6h-6zM1092.4 561h6v6h-6zM1158.4 567h6v6h-6zM960.4 633h6v6h-6zM966.4 633h6v6h-6zM978.4 633h6v6h-6zM990.4 633h6v6h-6zM1182.4 633h6v6h-6zM1200.4 633h6v6h-6zM1206.4 639h6v6h-6zM1254.4 627h6v6h-6zM1266.4 639h6v6h-6zM1272.4 627h6v6h-6zM1326.4 627h6v6h-6zM906.4 711h6v6h-6zM912.4 705h6v6h-6zM912.4 711h6v6h-6zM1086.4 699h6v6h-6zM1092.4 699h6v6h-6zM1092.4 711h6v6h-6zM900.4 783h6v6h-6zM918.4 783h6v6h-6zM936.4 777h6v6h-6zM972.4 777h6v6h-6zM1038.4 777h6v6h-6zM1050.4 783h6v6h-6zM1056.4 771h6v6h-6zM1062.4 777h6v6h-6zM1164.4 771h6v6h-6zM1182.4 783h6v6h-6zM1206.4 783h6v6h-6zM1230.4 771h6v6h-6zM1242.4 783h6v6h-6zM1248.4 783h6v6h-6zM1260.4 783h6v6h-6zM1266.4 783h6v6h-6zM948.4 849h6v6h-6zM972.4 855h6v6h-6zM978.4 855h6v6h-6zM984.4 849h6v6h-6zM1002.4 855h6v6h-6zM1032.4 849h6v6h-6zM1032.4 855h6v6h-6zM1086.4 843h6v6h-6zM1260.4 843h6v6h-6zM1266.4 843h6v6h-6zM906.4 1065h6v6h-6zM972.4 1071h6v6h-6zM1014.4 1065h6v6h-6zM1086.4 1065h6v6h-6zM1152.4 1059h6v6h-6zM1218.4 1071h6v6h-6zM1224.4 1071h6v6h-6zM1242.4 1065h6v6h-6zM1266.4 1065h6v6h-6zM1302.4 1065h6v6h-6zM1326.4 1059h6v6h-6zM906.4 1143h6v6h-6zM912.4 1137h6v6h-6zM912.4 1143h6v6h-6zM948.4 1143h6v6h-6zM972.4 1143h6v6h-6zM1026.4 1137h6v6h-6zM1050.4 1137h6v6h-6zM1068.4 1137h6v6h-6zM1086.4 1137h6v6h-6zM942.4 1209h6v6h-6zM942.4 1215h6v6h-6zM996.4 1215h6v6h-6zM1002.4 1209h6v6h-6zM1074.4 1209h6v6h-6zM1092.4 1203h6v6h-6zM1092.4 1215h6v6h-6zM936.4 1281h6v6h-6z"/><path fill-opacity="0.9" d="M906.4 489h6v6h-6zM912.4 495h6v6h-6zM1290.4 495h6v6h-6zM1302.4 483h6v6h-6zM954.4 561h6v6h-6zM966.4 567h6v6h-6zM1176.4 639h6v6h-6zM1278.4 639h6v6h-6zM1284.4 627h6v6h-6zM1074.4 705h6v6h-6zM1092.4 705h6v6h-6zM906.4 777h6v6h-6zM1254.4 783h6v6h-6zM1278.4 783h6v6h-6zM1308.4 783h6v6h-6zM900.4 849h6v6h-6zM912.4 1065h6v6h-6zM1158.4 1071h6v6h-6zM1260.4 1059h6v6h-6zM906.4 1137h6v6h-6zM936.4 1209h6v6h-6zM1044.4 1209h6v6h-6zM1050.4 1215h6v6h-6zM1050.4 1287h6v6h-6zM1086.4 1281h6v6h-6zM1092.4 1281h6v6h-6z"/><path fill-opacity="1" d="M1044.4 351h6v6h-6zM936.4 639h6v6h-6zM1044.4 633h6v6h-6z"/></svg>
<svg class="ab" style="left:228px;top:545px" width="190" height="40" viewBox="228 545 190 40" fill="#3a4670" shape-rendering="crispEdges"><path fill-opacity="0.1" d="M232 560.6h6v6h-6zM238 554.6h6v6h-6zM256 560.6h6v6h-6zM256 566.6h6v6h-6zM256 572.6h6v6h-6zM262 548.6h6v6h-6zM268 554.6h6v6h-6zM274 572.6h6v6h-6zM280 560.6h6v6h-6zM280 566.6h6v6h-6zM280 572.6h6v6h-6zM292 572.6h6v6h-6zM310 548.6h6v6h-6zM316 548.6h6v6h-6zM316 554.6h6v6h-6zM322 548.6h6v6h-6zM322 560.6h6v6h-6zM328 554.6h6v6h-6zM328 566.6h6v6h-6zM334 566.6h6v6h-6zM334 572.6h6v6h-6zM352 554.6h6v6h-6zM358 560.6h6v6h-6zM364 560.6h6v6h-6zM364 572.6h6v6h-6zM382 548.6h6v6h-6zM388 566.6h6v6h-6zM400 572.6h6v6h-6zM406 554.6h6v6h-6z"/><path fill-opacity="0.2" d="M244 554.6h6v6h-6zM262 560.6h6v6h-6zM262 566.6h6v6h-6zM298 566.6h6v6h-6zM304 554.6h6v6h-6zM310 566.6h6v6h-6zM322 566.6h6v6h-6zM334 554.6h6v6h-6zM340 560.6h6v6h-6zM340 566.6h6v6h-6zM352 566.6h6v6h-6zM358 554.6h6v6h-6zM364 554.6h6v6h-6zM370 560.6h6v6h-6zM370 566.6h6v6h-6zM394 566.6h6v6h-6zM400 554.6h6v6h-6zM400 566.6h6v6h-6z"/><path fill-opacity="0.3" d="M244 548.6h6v6h-6zM250 548.6h6v6h-6zM268 560.6h6v6h-6zM274 560.6h6v6h-6zM316 566.6h6v6h-6zM328 560.6h6v6h-6zM346 560.6h6v6h-6zM370 572.6h6v6h-6zM376 566.6h6v6h-6zM388 548.6h6v6h-6zM400 560.6h6v6h-6z"/><path fill-opacity="0.4" d="M262 554.6h6v6h-6zM268 572.6h6v6h-6zM274 566.6h6v6h-6zM292 566.6h6v6h-6zM298 554.6h6v6h-6zM328 548.6h6v6h-6zM376 554.6h6v6h-6zM382 554.6h6v6h-6zM382 560.6h6v6h-6zM382 566.6h6v6h-6zM388 554.6h6v6h-6zM388 560.6h6v6h-6zM394 560.6h6v6h-6zM406 560.6h6v6h-6z"/><path fill-opacity="0.5" d="M238 560.6h6v6h-6zM238 566.6h6v6h-6zM268 566.6h6v6h-6zM274 554.6h6v6h-6zM286 566.6h6v6h-6zM292 560.6h6v6h-6zM304 566.6h6v6h-6zM322 554.6h6v6h-6zM334 560.6h6v6h-6zM358 566.6h6v6h-6zM370 554.6h6v6h-6zM376 560.6h6v6h-6z"/><path fill-opacity="0.6" d="M250 560.6h6v6h-6zM304 560.6h6v6h-6z"/></svg>
</div></body></html>
